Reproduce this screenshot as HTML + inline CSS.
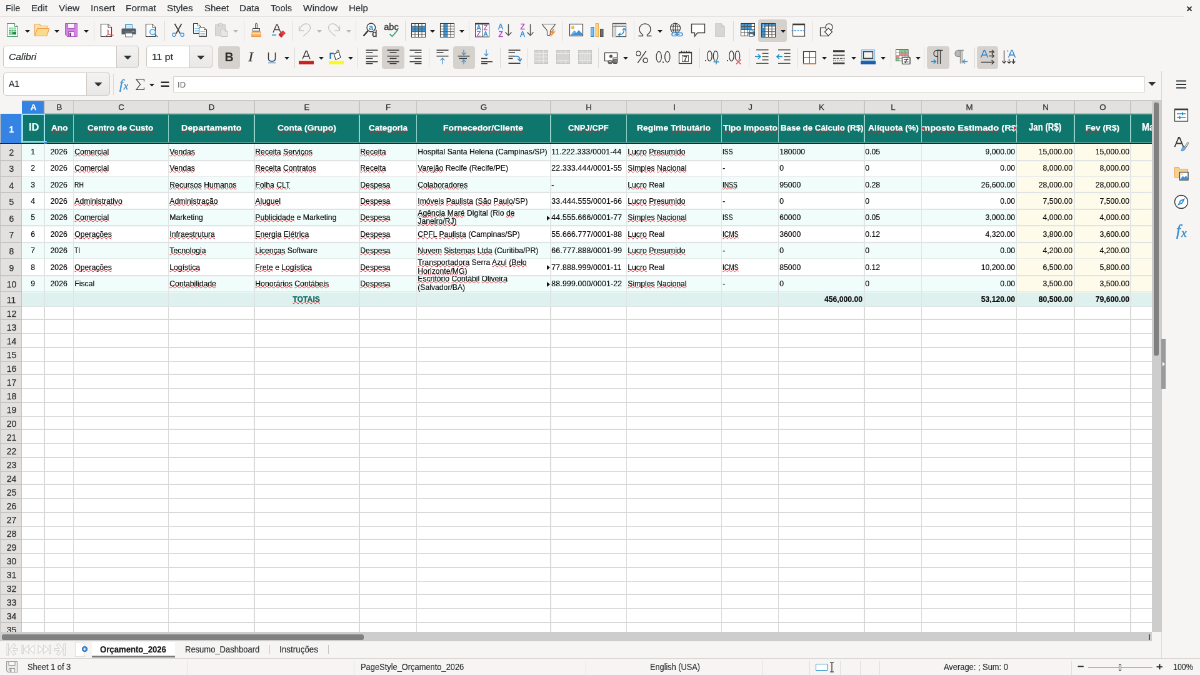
<!DOCTYPE html>
<html lang="en"><head><meta charset="utf-8"><title>Or&ccedil;amento_2026 - LibreOffice Calc</title>
<style>
html,body{margin:0;padding:0;width:1200px;height:675px;overflow:hidden;background:#f6f5f4}
#root{position:absolute;left:0;top:0;width:1920px;height:1080px;transform:scale(.625);transform-origin:0 0;font-family:"Liberation Sans",sans-serif;overflow:hidden;will-change:transform}
#root div,#root span.t,#root svg.i{position:absolute;box-sizing:border-box}
span.t{white-space:pre;transform-origin:0 50%;display:block;-webkit-text-stroke:.22px currentColor}
u{text-decoration:underline wavy #e01b24;text-decoration-thickness:1.45px;text-underline-offset:-0.5px;text-decoration-skip-ink:none}
.c{display:flex;align-items:center;overflow:hidden;white-space:pre;font-size:12.2px;color:#0c0c0c;padding:0 2px 0 1.3px;-webkit-text-stroke:.2px #0c0c0c}
.c.r{justify-content:flex-end}
.c.m{justify-content:center}
.c.b{font-weight:700}
.c.wr{white-space:normal;line-height:13.6px;align-items:center}
.rh{display:flex;align-items:center;justify-content:center;font-size:15.4px;color:#2e2e2e;-webkit-text-stroke:.25px currentColor}

</style></head>
<body>
<div id="root">
<span class="t" style="left:8.8px;top:5.38px;font-size:14.5px;line-height:17.4px;color:#2e3436;transform:scaleX(0.9925);">File</span>
<span class="t" style="left:50px;top:5.38px;font-size:14.5px;line-height:17.4px;color:#2e3436;transform:scaleX(1.0400);">Edit</span>
<span class="t" style="left:94px;top:5.38px;font-size:14.5px;line-height:17.4px;color:#2e3436;transform:scaleX(1.0651);">View</span>
<span class="t" style="left:144.8px;top:5.38px;font-size:14.5px;line-height:17.4px;color:#2e3436;transform:scaleX(1.0809);">Insert</span>
<span class="t" style="left:201.2px;top:5.38px;font-size:14.5px;line-height:17.4px;color:#2e3436;transform:scaleX(1.0627);">Format</span>
<span class="t" style="left:267.2px;top:5.38px;font-size:14.5px;line-height:17.4px;color:#2e3436;transform:scaleX(1.0532);">Styles</span>
<span class="t" style="left:326.8px;top:5.38px;font-size:14.5px;line-height:17.4px;color:#2e3436;transform:scaleX(1.0341);">Sheet</span>
<span class="t" style="left:383.2px;top:5.38px;font-size:14.5px;line-height:17.4px;color:#2e3436;transform:scaleX(1.0444);">Data</span>
<span class="t" style="left:433.2px;top:5.38px;font-size:14.5px;line-height:17.4px;color:#2e3436;transform:scaleX(1.0042);">Tools</span>
<span class="t" style="left:484.8px;top:5.38px;font-size:14.5px;line-height:17.4px;color:#2e3436;transform:scaleX(1.0702);">Window</span>
<span class="t" style="left:558px;top:5.38px;font-size:14.5px;line-height:17.4px;color:#2e3436;transform:scaleX(1.0326);">Help</span>
<div style="left:0px;top:25.6px;width:1894.4px;height:0px;height:1px;background:#e4e2e0;"></div>
<svg class="i" style="left:1897.6px;top:10.08px" width="10" height="8" viewBox="0 0 10 8"><path d="M1.5 0.5L8.5 7.5M8.5 0.5L1.5 7.5" stroke="#2e3436" stroke-width="1.9" fill="none"/></svg>
<div style="left:1212.8px;top:31.2px;width:46.4px;height:36px;background:#d5d2ce;border-radius:4px;"></div>
<svg class="i" style="left:7.68px;top:36px;" width="24" height="24" viewBox="0 0 24 24"><path d="M3.5 1.5H15.5L20.5 6.5V22.5H3.5Z" stroke="#3f9c63" fill="#fff" stroke-width="1" /><path d="M15.5 1.5V6.5H20.5" stroke="#3f9c63" fill="#fff" stroke-width="1" /><rect x="6" y="8.5" width="12" height="11" stroke="none" fill="#4bb06b" stroke-width="1" /><rect x="6" y="8.5" width="12" height="3" stroke="none" fill="#8fd6a4" stroke-width="1" /><path d="M6 11.5H18M6 14.2H18M6 16.9H18M10 8.5V19.5M14 8.5V19.5" stroke="#e2f6e8" fill="none" stroke-width="0.9" /><rect x="12" y="15.5" width="6" height="3" stroke="none" fill="#1f7f42" stroke-width="1" /></svg>
<svg class="i" style="left:55.2px;top:36px;" width="24" height="24" viewBox="0 0 24 24"><path d="M0.5 21V2.5H8L10.5 5.5H20.5V10" stroke="#ee9f4e" fill="#fbe3a8" stroke-width="1.2" /><path d="M0.5 21.5L4.8 9.5H24L19.8 21.5Z" stroke="#ee9f4e" fill="#fadb8c" stroke-width="1.2" /></svg>
<svg class="i" style="left:101.6px;top:36px;" width="24" height="24" viewBox="0 0 24 24"><path d="M2.5 1.5H21.5V22.5H5.5L2.5 19.5Z" stroke="#b055c2" fill="#d287e0" stroke-width="1" /><rect x="6.5" y="1.5" width="11" height="8" stroke="#b055c2" fill="#fbf3fc" stroke-width="1" /><rect x="7.5" y="14.5" width="9" height="8" stroke="#b055c2" fill="#fbf3fc" stroke-width="1" /><rect x="9.2" y="16.5" width="2.6" height="5.5" stroke="none" fill="#6b3a78" stroke-width="1" /></svg>
<svg class="i" style="left:159.2px;top:36px;" width="24" height="24" viewBox="0 0 24 24"><path d="M2.5 2.5H14L19.5 8V22.5H2.5Z" stroke="#3a3a38" fill="#fff" stroke-width="1.2" /><path d="M14 2.5V8H19.5" stroke="#3a3a38" fill="#fff" stroke-width="1" /><path d="M13.6 11.5C12.6 11.5 12.8 14.8 14.2 17.4C15.7 20 20 21.8 22.2 21C23.8 20.3 20 18.8 16 19.2C12.8 19.5 9.5 21.5 9.2 22.8C9 24 11.8 22 13.5 18C14.8 15 14.6 11.5 13.6 11.5Z" stroke="#e8524e" fill="none" stroke-width="1" /></svg>
<svg class="i" style="left:194.4px;top:36px;" width="24" height="24" viewBox="0 0 24 24"><rect x="6.5" y="3.5" width="11" height="7" stroke="#1e8bcd" fill="#cfe9fa" stroke-width="1" /><path d="M2 9.5H22A1.5 1.5 0 0 1 23.5 11V19H0.5V11A1.5 1.5 0 0 1 2 9.5Z" stroke="none" fill="#535c64" stroke-width="1" /><rect x="6.5" y="17" width="11" height="6" stroke="#6d7479" fill="#fff" stroke-width="1" /><path d="M18 14.2H20.5" stroke="#d8dde0" fill="none" stroke-width="1.4" /><path d="M4 15H20" stroke="#78818a" fill="none" stroke-width="1" /></svg>
<svg class="i" style="left:230.4px;top:36px;" width="24" height="24" viewBox="0 0 24 24"><path d="M3.5 2.5H13.5L18.5 7.5V22.5H3.5Z" stroke="#3a3a38" fill="#fff" stroke-width="1.2" /><path d="M13.5 2.5V7.5H18.5" stroke="#3a3a38" fill="#fff" stroke-width="1" /><circle cx="14.2" cy="15.2" r="4.4" fill="#e9f4fc" stroke="#2a8fd6" stroke-width="1.3"/><path d="M17.3 18.3L22.3 23.3" stroke="#2a8fd6" fill="none" stroke-width="1.6" /></svg>
<svg class="i" style="left:272.8px;top:36px;" width="24" height="24" viewBox="0 0 24 24"><path d="M6.5 2L15.2 17.5M17.5 2L8.8 17.5" stroke="#3a3a38" fill="none" stroke-width="1.7" /><circle cx="5.4" cy="19.6" r="2.7" fill="#f6f5f4" stroke="#3d91d6" stroke-width="1.3"/><circle cx="18.6" cy="19.6" r="2.7" fill="#f6f5f4" stroke="#3d91d6" stroke-width="1.3"/></svg>
<svg class="i" style="left:308px;top:36px;" width="24" height="24" viewBox="0 0 24 24"><path d="M1.5 1.5H8.5L12.5 5.5V17.5H1.5Z" stroke="#3a3a38" fill="#fff" stroke-width="1" /><path d="M8.5 1.5V5.5H12.5" stroke="#3a3a38" fill="#fff" stroke-width="1" /><path d="M3.5 9.5H10.5M3.5 12.5H10.5M3.5 15H10.5" stroke="#86c5ee" fill="none" stroke-width="1.2" /><path d="M10.5 7.5H18.5L22.5 11.5V22.5H10.5Z" stroke="#3a3a38" fill="#fff" stroke-width="1" /><path d="M18.5 7.5V11.5H22.5" stroke="#3a3a38" fill="#fff" stroke-width="1" /><path d="M12.5 14.5H20.5M12.5 17.5H20.5M12.5 20.2H20.5" stroke="#86c5ee" fill="none" stroke-width="1.2" /></svg>
<svg class="i" style="left:342.4px;top:36px;" width="24" height="24" viewBox="0 0 24 24"><path d="M2.5 3.5H18.5V21.5H2.5Z" stroke="#c9c9c7" fill="#d9d9d7" stroke-width="1" /><path d="M7.5 3.5V1.8H9.5A1.2 1.2 0 0 1 11.5 1.8H13.5V5H7.5Z" stroke="#c0c0be" fill="#e4e4e2" stroke-width="1" /><path d="M11.5 10.5H18L21.5 14V22.5H11.5Z" stroke="#c0c0be" fill="#e6e6e4" stroke-width="1" /><path d="M18 10.5V14H21.5" stroke="#c0c0be" fill="none" stroke-width="1" /></svg>
<svg class="i" style="left:398.4px;top:36px;" width="24" height="24" viewBox="0 0 24 24"><path d="M10.7 2A1.4 1.4 0 0 1 13.3 2V9.5H10.7Z" stroke="#3a3a38" fill="#fff" stroke-width="1" /><path d="M6.5 9.5H17.5V13.5H6.5Z" stroke="#3a3a38" fill="#fff" stroke-width="1" /><path d="M5.5 14.5H18.5L19.5 22.5H4.5Z" stroke="#ea9447" fill="#f7b66c" stroke-width="1" /><path d="M5.6 17.5H18.6" stroke="#fbe2c4" fill="none" stroke-width="1.6" /></svg>
<svg class="i" style="left:434.4px;top:36px;" width="24" height="24" viewBox="0 0 24 24"><path d="M3 16L8.4 3.5H9.8L15 16M5.2 11.5H12.8" stroke="#3a3a38" fill="none" stroke-width="1.4" /><path d="M1 20H8" stroke="#1e8bcd" fill="none" stroke-width="1.4" /><path d="M11.5 19.5L18.5 12.5L23 17L16 24Z" stroke="none" fill="#e5383b" stroke-width="1" /><path d="M11.5 19.5L14 17L18.5 21.5L16 24Z" stroke="none" fill="#c1272d" stroke-width="1" /></svg>
<svg class="i" style="left:476.64px;top:36px;" width="24" height="24" viewBox="0 0 24 24"><path d="M8 22C13 17.5 19.5 14 19.5 8.5C19.5 4.5 16.5 2 12.5 2C8 2 3.5 6.5 2 12.5M1.5 5V13H9.5" stroke="#c4c4c2" fill="none" stroke-width="1.3" /></svg>
<svg class="i" style="left:521.12px;top:36px;" width="24" height="24" viewBox="0 0 24 24"><path d="M16 22C11 17.5 4.5 14 4.5 8.5C4.5 4.5 7.5 2 11.5 2C16 2 20.5 6.5 22 12.5M22.5 5V13H14.5" stroke="#c4c4c2" fill="none" stroke-width="1.3" /></svg>
<svg class="i" style="left:580px;top:36px;" width="24" height="24" viewBox="0 0 24 24"><circle cx="13.8" cy="8" r="6.8" fill="#fff" stroke="#3a3a38" stroke-width="1.4"/><path d="M9 13L1.5 21.5" stroke="#2e2e2c" fill="none" stroke-width="2.3" /><text x="10.1" y="12.2" font-size="13" fill="#1e8bcd" font-weight="700" font-family="Liberation Sans" >a</text><text x="15.2" y="22.6" font-size="14.5" fill="#2e2e2c" font-weight="400" font-family="Liberation Sans" stroke="#2e2e2c" stroke-width=".3">d</text></svg>
<svg class="i" style="left:614.4px;top:36px;" width="24" height="24" viewBox="0 0 24 24"><text x="0.3" y="11.6" font-size="14.5" fill="#3a3a38" font-weight="400" font-family="Liberation Sans" textLength="23.4" lengthAdjust="spacingAndGlyphs" stroke="#3a3a38" stroke-width=".45">abc</text><path d="M9.5 18.5L13.5 22.3L22.5 11.8" stroke="#31a566" fill="none" stroke-width="1.8" /></svg>
<svg class="i" style="left:656.8px;top:36px;" width="24" height="24" viewBox="0 0 24 24"><rect x="1.5" y="1.5" width="22" height="22" stroke="#3a3a38" fill="#fff" stroke-width="1" /><rect x="1.5" y="5.9" width="5.5" height="4.4" stroke="none" fill="#3d9be0" stroke-width="1" /><rect x="1.5" y="10.3" width="5.5" height="4.4" stroke="none" fill="#3d9be0" stroke-width="1" /><rect x="7.0" y="5.9" width="5.5" height="4.4" stroke="none" fill="#3d9be0" stroke-width="1" /><rect x="7.0" y="10.3" width="5.5" height="4.4" stroke="none" fill="#3d9be0" stroke-width="1" /><rect x="12.5" y="5.9" width="5.5" height="4.4" stroke="none" fill="#3d9be0" stroke-width="1" /><rect x="12.5" y="10.3" width="5.5" height="4.4" stroke="none" fill="#3d9be0" stroke-width="1" /><rect x="18.0" y="5.9" width="5.5" height="4.4" stroke="none" fill="#3d9be0" stroke-width="1" /><rect x="18.0" y="10.3" width="5.5" height="4.4" stroke="none" fill="#3d9be0" stroke-width="1" /><path d="M7.00 1.5V23.5M12.50 1.5V23.5M18.00 1.5V23.5M1.5 5.90H23.5M1.5 10.30H23.5M1.5 14.70H23.5M1.5 19.10H23.5" stroke="#50504c" fill="none" stroke-width="1" /><rect x="1.5" y="1.5" width="22" height="22" stroke="#3a3a38" fill="none" stroke-width="1.1" /></svg>
<svg class="i" style="left:703.2px;top:36px;" width="24" height="24" viewBox="0 0 24 24"><rect x="1.5" y="1.5" width="22" height="22" stroke="#3a3a38" fill="#fff" stroke-width="1" /><rect x="7.0" y="1.5" width="5.5" height="4.4" stroke="none" fill="#3d9be0" stroke-width="1" /><rect x="7.0" y="5.9" width="5.5" height="4.4" stroke="none" fill="#3d9be0" stroke-width="1" /><rect x="7.0" y="10.3" width="5.5" height="4.4" stroke="none" fill="#3d9be0" stroke-width="1" /><rect x="7.0" y="14.700000000000001" width="5.5" height="4.4" stroke="none" fill="#3d9be0" stroke-width="1" /><rect x="7.0" y="19.1" width="5.5" height="4.4" stroke="none" fill="#3d9be0" stroke-width="1" /><path d="M7.00 1.5V23.5M12.50 1.5V23.5M18.00 1.5V23.5M1.5 5.90H23.5M1.5 10.30H23.5M1.5 14.70H23.5M1.5 19.10H23.5" stroke="#50504c" fill="none" stroke-width="1" /><rect x="1.5" y="1.5" width="22" height="22" stroke="#3a3a38" fill="none" stroke-width="1.1" /></svg>
<svg class="i" style="left:759.2px;top:36px;" width="24" height="24" viewBox="0 0 24 24"><rect x="1.5" y="2.5" width="22" height="20.5" stroke="#3a3a38" fill="#fff" stroke-width="1" /><path d="M1 2H24" stroke="#3a3a38" fill="none" stroke-width="2.4" /><path d="M12.5 3V23" stroke="#3a3a38" fill="none" stroke-width="1" /><text x="3.4" y="12.4" font-size="10.5" fill="#3d91d6" font-weight="400" font-family="Liberation Sans" stroke="#3d91d6" stroke-width=".5">A</text><text x="3.8" y="21.8" font-size="10.5" fill="#b44cc4" font-weight="400" font-family="Liberation Sans" stroke="#b44cc4" stroke-width=".5">Z</text><text x="14.8" y="12.4" font-size="10.5" fill="#b44cc4" font-weight="400" font-family="Liberation Sans" stroke="#b44cc4" stroke-width=".5">Z</text><text x="14.4" y="21.8" font-size="10.5" fill="#3d91d6" font-weight="400" font-family="Liberation Sans" stroke="#3d91d6" stroke-width=".5">A</text></svg>
<svg class="i" style="left:796px;top:36px;" width="24" height="24" viewBox="0 0 24 24"><text x="1" y="10.8" font-size="12" fill="#3d91d6" font-weight="400" font-family="Liberation Sans" stroke="#3d91d6" stroke-width=".5">A</text><text x="1.4" y="22.8" font-size="12" fill="#b44cc4" font-weight="400" font-family="Liberation Sans" stroke="#b44cc4" stroke-width=".5">Z</text><path d="M17.5 2.5V20.5M12.5 15.5L17.5 20.8L22.5 15.5" stroke="#55554f" fill="none" stroke-width="1.4" /></svg>
<svg class="i" style="left:831.2px;top:36px;" width="24" height="24" viewBox="0 0 24 24"><text x="1.4" y="10.8" font-size="12" fill="#b44cc4" font-weight="400" font-family="Liberation Sans" stroke="#b44cc4" stroke-width=".5">Z</text><text x="1" y="22.8" font-size="12" fill="#3d91d6" font-weight="400" font-family="Liberation Sans" stroke="#3d91d6" stroke-width=".5">A</text><path d="M17.5 2.5V20.5M12.5 15.5L17.5 20.8L22.5 15.5" stroke="#55554f" fill="none" stroke-width="1.4" /></svg>
<svg class="i" style="left:866.4px;top:36px;" width="24" height="24" viewBox="0 0 24 24"><path d="M1.5 2.5H22.5C20.5 7.5 15 10.5 14.5 13.5V19.5C13 21 10.5 21 9.5 19.8V13.5C9 10.5 3.5 7.5 1.5 2.5Z" stroke="#55554f" fill="none" stroke-width="1.2" /><path d="M19.5 10L13 17.2H17L14 24L22.8 14.2H18.6L21.8 10Z" stroke="none" fill="#f0913d" stroke-width="1" /></svg>
<svg class="i" style="left:909.6px;top:36px;" width="24" height="24" viewBox="0 0 24 24"><rect x="1.5" y="2.5" width="21" height="19" stroke="#3a3a38" fill="#fff" stroke-width="1.2" /><circle cx="6.5" cy="8" r="2.2" fill="#f5c252" stroke="#e8a838" stroke-width=".8"/><path d="M2.5 20.5L9 12.5L12.5 16.5L16 12L21.5 18V20.5Z" stroke="none" fill="#3d91d6" stroke-width="1" /><path d="M2.5 20.5L9 12.5L12 16" stroke="none" fill="#6fb0e6" stroke-width="1" /></svg>
<svg class="i" style="left:943.2px;top:36px;" width="24" height="24" viewBox="0 0 24 24"><rect x="2.5" y="7.5" width="4.5" height="15" stroke="#1e8bcd" fill="#7ebdf0" stroke-width="1" /><rect x="10" y="1.5" width="4.5" height="21" stroke="#f0b14a" fill="#f9d48b" stroke-width="1" /><rect x="17.5" y="10.5" width="4.5" height="12" stroke="#4d4d4b" fill="#6e6e6c" stroke-width="1" /></svg>
<svg class="i" style="left:979.36px;top:36px;" width="24" height="24" viewBox="0 0 24 24"><rect x="1.5" y="1.5" width="21" height="21" stroke="#55554f" fill="#fff" stroke-width="1.3" /><path d="M2 2H23V6.5H6.5V23H2Z" stroke="none" fill="#d6d6d4" stroke-width="1" /><path d="M6.5 2V23M2 6.5H23" stroke="#8a8a88" fill="none" stroke-width="1" /><path d="M11 19.5C18 19.5 19.5 16 19.5 10" stroke="#1e8bcd" fill="none" stroke-width="1.4" /><path d="M16.8 12.2L19.5 9.2L22.2 12.2M13.6 16.8L10.4 19.5L13.6 22.2" stroke="#1e8bcd" fill="none" stroke-width="1.3" /></svg>
<svg class="i" style="left:1020px;top:36px;" width="24" height="24" viewBox="0 0 24 24"><path d="M1.5 21.5H8.5V19.5C5 17.5 3 14.5 3 10.5C3 5.5 7 2 12 2C17 2 21 5.5 21 10.5C21 14.5 19 17.5 15.5 19.5V21.5H22.5" stroke="#3a3a38" fill="none" stroke-width="1.3" /></svg>
<svg class="i" style="left:1069.6px;top:36px;" width="24" height="24" viewBox="0 0 24 24"><circle cx="10.5" cy="9" r="8" fill="none" stroke="#3a3a38" stroke-width="1.1"/><ellipse cx="10.5" cy="9" rx="3.6" ry="8" fill="none" stroke="#3a3a38" stroke-width="1"/><path d="M2.8 6H18.2M2.8 12H18.2M10.5 1V17" stroke="#3a3a38" fill="none" stroke-width="1" /><rect x="5" y="16.5" width="9" height="5" stroke="#3d91d6" fill="#f6f5f4" stroke-width="1.6" rx="2.5"/><rect x="13" y="16.5" width="9" height="5" stroke="#3d91d6" fill="none" stroke-width="1.6" rx="2.5"/><path d="M9.5 19H17.5" stroke="#3d91d6" fill="none" stroke-width="1.6" /></svg>
<svg class="i" style="left:1104.8px;top:36px;" width="24" height="24" viewBox="0 0 24 24"><path d="M1.5 2.5H22.5V16.5H11L6.5 22V16.5H1.5Z" stroke="#3a3a38" fill="#fff" stroke-width="1.4" /></svg>
<svg class="i" style="left:1140px;top:36px;" width="24" height="24" viewBox="0 0 24 24"><path d="M4.5 1.5H14.5L19.5 6.5V22.5H4.5Z" stroke="#cfcfcd" fill="#d6d6d4" stroke-width="1" /><path d="M14.5 1.5V6.5H19.5" stroke="#c6c6c4" fill="#e2e2e0" stroke-width="1" /></svg>
<svg class="i" style="left:1184px;top:36px;" width="24" height="24" viewBox="0 0 24 24"><rect x="1.5" y="1.5" width="22" height="20" stroke="#3a3a38" fill="#fff" stroke-width="1" /><rect x="1.5" y="1.5" width="5.5" height="5.0" stroke="none" fill="#3d9be0" stroke-width="1" /><rect x="7.0" y="1.5" width="5.5" height="5.0" stroke="none" fill="#3d9be0" stroke-width="1" /><rect x="12.5" y="1.5" width="5.5" height="5.0" stroke="none" fill="#3d9be0" stroke-width="1" /><rect x="1.5" y="6.5" width="5.5" height="5.0" stroke="none" fill="#3d9be0" stroke-width="1" /><rect x="7.0" y="6.5" width="5.5" height="5.0" stroke="none" fill="#3d9be0" stroke-width="1" /><rect x="12.5" y="6.5" width="5.5" height="5.0" stroke="none" fill="#3d9be0" stroke-width="1" /><path d="M7.00 1.5V21.5M12.50 1.5V21.5M18.00 1.5V21.5M1.5 6.50H23.5M1.5 11.50H23.5M1.5 16.50H23.5" stroke="#50504c" fill="none" stroke-width="1" /><rect x="1.5" y="1.5" width="22" height="20" stroke="#3a3a38" fill="none" stroke-width="1.1" /><rect x="13.5" y="14.5" width="9.5" height="5.5" stroke="none" fill="#535c64" stroke-width="1" rx="1"/><rect x="15.5" y="12" width="5.5" height="3.5" stroke="#1e8bcd" fill="#cfe9fa" stroke-width="0.9" /><rect x="15.5" y="18" width="5.5" height="4.5" stroke="#6d7479" fill="#fff" stroke-width="0.9" /></svg>
<svg class="i" style="left:1265.6px;top:36px;" width="24" height="24" viewBox="0 0 24 24"><rect x="2.5" y="2.5" width="19" height="19.5" stroke="#3a3a38" fill="#fff" stroke-width="1.2" /><path d="M2 3H22" stroke="#3a3a38" fill="none" stroke-width="2.6" /><path d="M0.5 13H23.5" stroke="#3d91d6" fill="none" stroke-width="1.4" stroke-dasharray="3 1.6"/></svg>
<svg class="i" style="left:1309.6px;top:36px;" width="24" height="24" viewBox="0 0 24 24"><rect x="2.5" y="8.5" width="13" height="13" stroke="#3a3a38" fill="#f6f5f4" stroke-width="1.2" /><circle cx="16.5" cy="7.5" r="5.6" fill="#f6f5f4" stroke="#3a3a38" stroke-width="1.2"/><path d="M9.5 15L15.5 9L21.5 15L15.5 21Z" stroke="#3a3a38" fill="#fff" stroke-width="1.2" /></svg>
<svg class="i" style="left:1217.12px;top:36px;" width="24" height="24" viewBox="0 0 24 24"><rect x="1.5" y="1.5" width="22" height="22" stroke="#3a3a38" fill="#fff" stroke-width="1" /><rect x="1.5" y="1.5" width="5.5" height="4.4" stroke="none" fill="#3d9be0" stroke-width="1" /><rect x="7.0" y="1.5" width="5.5" height="4.4" stroke="none" fill="#3d9be0" stroke-width="1" /><rect x="12.5" y="1.5" width="5.5" height="4.4" stroke="none" fill="#3d9be0" stroke-width="1" /><rect x="18.0" y="1.5" width="5.5" height="4.4" stroke="none" fill="#3d9be0" stroke-width="1" /><rect x="1.5" y="5.9" width="5.5" height="4.4" stroke="none" fill="#3d9be0" stroke-width="1" /><rect x="1.5" y="10.3" width="5.5" height="4.4" stroke="none" fill="#3d9be0" stroke-width="1" /><rect x="1.5" y="14.700000000000001" width="5.5" height="4.4" stroke="none" fill="#3d9be0" stroke-width="1" /><rect x="1.5" y="19.1" width="5.5" height="4.4" stroke="none" fill="#3d9be0" stroke-width="1" /><path d="M7.00 1.5V23.5M12.50 1.5V23.5M18.00 1.5V23.5M1.5 5.90H23.5M1.5 10.30H23.5M1.5 14.70H23.5M1.5 19.10H23.5" stroke="#50504c" fill="none" stroke-width="1" /><rect x="1.5" y="1.5" width="22" height="22" stroke="#3a3a38" fill="none" stroke-width="1.1" /><path d="M4.2 3.5V9M2.6 7.3L4.2 9L5.8 7.3" stroke="#dff0fb" fill="none" stroke-width="0.9" /></svg>
<svg class="i" style="left:40px;top:47.83px" width="8" height="4.5" viewBox="0 0 8 4.5"><path d="M0 0H8L4.0 4.5Z" fill="#1c1c1c"/></svg>
<svg class="i" style="left:87.2px;top:47.83px" width="8" height="4.5" viewBox="0 0 8 4.5"><path d="M0 0H8L4.0 4.5Z" fill="#1c1c1c"/></svg>
<svg class="i" style="left:134px;top:47.83px" width="8" height="4.5" viewBox="0 0 8 4.5"><path d="M0 0H8L4.0 4.5Z" fill="#1c1c1c"/></svg>
<svg class="i" style="left:372.8px;top:47.83px" width="8" height="4.5" viewBox="0 0 8 4.5"><path d="M0 0H8L4.0 4.5Z" fill="#b8b8b6"/></svg>
<svg class="i" style="left:507.2px;top:47.83px" width="8" height="4.5" viewBox="0 0 8 4.5"><path d="M0 0H8L4.0 4.5Z" fill="#b8b8b6"/></svg>
<svg class="i" style="left:554px;top:47.83px" width="8" height="4.5" viewBox="0 0 8 4.5"><path d="M0 0H8L4.0 4.5Z" fill="#b8b8b6"/></svg>
<svg class="i" style="left:688px;top:47.83px" width="8" height="4.5" viewBox="0 0 8 4.5"><path d="M0 0H8L4.0 4.5Z" fill="#1c1c1c"/></svg>
<svg class="i" style="left:735.2px;top:47.83px" width="8" height="4.5" viewBox="0 0 8 4.5"><path d="M0 0H8L4.0 4.5Z" fill="#1c1c1c"/></svg>
<svg class="i" style="left:1052px;top:47.83px" width="8" height="4.5" viewBox="0 0 8 4.5"><path d="M0 0H8L4.0 4.5Z" fill="#1c1c1c"/></svg>
<svg class="i" style="left:1248.8px;top:47.83px" width="8" height="4.5" viewBox="0 0 8 4.5"><path d="M0 0H8L4.0 4.5Z" fill="#1c1c1c"/></svg>
<div style="left:150px;top:32.8px;width:0px;height:32.8px;width:1px;background:#dcdad7;"></div>
<div style="left:263.2px;top:32.8px;width:0px;height:32.8px;width:1px;background:#dcdad7;"></div>
<div style="left:390px;top:32.8px;width:0px;height:32.8px;width:1px;background:#dcdad7;"></div>
<div style="left:468px;top:32.8px;width:0px;height:32.8px;width:1px;background:#dcdad7;"></div>
<div style="left:568.8px;top:32.8px;width:0px;height:32.8px;width:1px;background:#dcdad7;"></div>
<div style="left:648px;top:32.8px;width:0px;height:32.8px;width:1px;background:#dcdad7;"></div>
<div style="left:750px;top:32.8px;width:0px;height:32.8px;width:1px;background:#dcdad7;"></div>
<div style="left:900px;top:32.8px;width:0px;height:32.8px;width:1px;background:#dcdad7;"></div>
<div style="left:1014px;top:32.8px;width:0px;height:32.8px;width:1px;background:#dcdad7;"></div>
<div style="left:1173.2px;top:32.8px;width:0px;height:32.8px;width:1px;background:#dcdad7;"></div>
<div style="left:1300px;top:32.8px;width:0px;height:32.8px;width:1px;background:#dcdad7;"></div>
<div style="left:5.12px;top:73.28px;width:217.28px;height:36.16px;background:#fff;border:1px solid #cdc7c2;border-radius:5px;"></div>
<div style="left:186.08px;top:73.28px;width:36.32px;height:36.16px;background:linear-gradient(#f4f3f2,#e9e8e6);border:1px solid #cdc7c2;border-radius:0 5px 5px 0;"></div>
<svg class="i" style="left:198.31px;top:88.59px" width="12.5" height="6.5" viewBox="0 0 12.5 6.5"><path d="M0 0H12.5L6.25 6.5Z" fill="#2e3436"/></svg>
<span class="t" style="left:14.4px;top:82.5px;font-size:14.5px;line-height:17.4px;color:#2e3436;font-style:italic;transform:scaleX(1.0785);">Calibri</span>
<div style="left:233.6px;top:73.28px;width:106.4px;height:36.16px;background:#fff;border:1px solid #cdc7c2;border-radius:5px;"></div>
<div style="left:302.8px;top:73.28px;width:37.2px;height:36.16px;background:linear-gradient(#f4f3f2,#e9e8e6);border:1px solid #cdc7c2;border-radius:0 5px 5px 0;"></div>
<svg class="i" style="left:315.47px;top:88.59px" width="12.5" height="6.5" viewBox="0 0 12.5 6.5"><path d="M0 0H12.5L6.25 6.5Z" fill="#2e3436"/></svg>
<span class="t" style="left:242.8px;top:82.82px;font-size:14.5px;line-height:17.4px;color:#2e3436;transform:scaleX(1.0902);">11 pt</span>
<div style="left:348.8px;top:73.6px;width:35.2px;height:36.8px;background:#d5d2ce;border-radius:4px;"></div>
<div style="left:611.2px;top:73.6px;width:35.6px;height:36.8px;background:#d5d2ce;border-radius:4px;"></div>
<div style="left:724.8px;top:73.6px;width:35.2px;height:36.8px;background:#d5d2ce;border-radius:4px;"></div>
<div style="left:1483.2px;top:73.6px;width:35.6px;height:36.8px;background:#d5d2ce;border-radius:4px;"></div>
<div style="left:1562.8px;top:73.6px;width:34.4px;height:36.8px;background:#d5d2ce;border-radius:4px;"></div>
<svg class="i" style="left:353.76px;top:79.04px;" width="24" height="24" viewBox="0 0 24 24"><text x="5.4" y="19" font-size="19.5" fill="#2e2e2c" font-weight="700" font-family="Liberation Sans" >B</text></svg>
<svg class="i" style="left:390.4px;top:79.04px;" width="24" height="24" viewBox="0 0 24 24"><text x="7.4" y="19.4" font-size="22" fill="#3a3a38" stroke="#3a3a38" stroke-width=".5" font-style="italic" font-family="Liberation Serif">I</text></svg>
<svg class="i" style="left:423.2px;top:79.04px;" width="24" height="24" viewBox="0 0 24 24"><path d="M6.5 5V14.5C6.5 17.8 8.8 19 12 19C15.2 19 17.5 17.8 17.5 14.5V5" stroke="#3a3a38" fill="none" stroke-width="1.5" /><path d="M6 21.6H18" stroke="#3d91d6" fill="none" stroke-width="1.3" /></svg>
<svg class="i" style="left:477.6px;top:79.04px;" width="24" height="24" viewBox="0 0 24 24"><path d="M6 15.5L11.4 2.5H12.8L18 15.5M8.2 11H15.8" stroke="#3a3a38" fill="none" stroke-width="1.5" /><rect x="-0.5" y="18.5" width="25.5" height="5.5" stroke="none" fill="#c9211e" stroke-width="1" /></svg>
<svg class="i" style="left:526.08px;top:79.04px;" width="24" height="24" viewBox="0 0 24 24"><rect x="-1" y="18.5" width="26" height="5.6" stroke="none" fill="#fafa1e" stroke-width="1" /><path d="M8.5 7.5L16 4L19 13L11 16.5Z" stroke="#3a3a38" fill="#fff" stroke-width="1.1" /><path d="M13 6V2.8A1.6 1.6 0 0 1 16.2 2.8V4.5" stroke="#3a3a38" fill="none" stroke-width="1" /><path d="M2.5 15V6.5H8" stroke="#1e6fb8" fill="none" stroke-width="2" /></svg>
<svg class="i" style="left:582.72px;top:79.04px;" width="24" height="24" viewBox="0 0 24 24"><path d="M2.5 1.3H21.5M2.5 5.2H13.5M2.5 10.7H21.5M2.5 14.6H13.5M2.5 19.8H21.5M2.5 22.8H13.5" stroke="#3a3a38" fill="none" stroke-width="1.5" /></svg>
<svg class="i" style="left:616.96px;top:79.04px;" width="24" height="24" viewBox="0 0 24 24"><path d="M2.5 1.3H21.5M6.5 5.2H17.5M2.5 10.7H21.5M6.5 14.6H17.5M2.5 19.8H21.5M6.5 22.8H17.5" stroke="#3a3a38" fill="none" stroke-width="1.5" /></svg>
<svg class="i" style="left:652.8px;top:79.04px;" width="24" height="24" viewBox="0 0 24 24"><path d="M2.5 1.3H21.5M10.5 5.2H21.5M2.5 10.7H21.5M10.5 14.6H21.5M2.5 19.8H21.5M10.5 22.8H21.5" stroke="#3a3a38" fill="none" stroke-width="1.5" /></svg>
<svg class="i" style="left:696px;top:79.04px;" width="24" height="24" viewBox="0 0 24 24"><path d="M2.5 1.3H21.5M2.5 5.2H13.5M2.5 10.7H21.5" stroke="#3a3a38" fill="none" stroke-width="1.5" /><path d="M12 23.8V14M8.7 17.5L12 14L15.3 17.5" stroke="#3d91d6" fill="none" stroke-width="1.3" /></svg>
<svg class="i" style="left:730.4px;top:79.04px;" width="24" height="24" viewBox="0 0 24 24"><path d="M12 0.5V8.8M8.7 5.300000000000001L12 8.8L15.3 5.300000000000001" stroke="#3d91d6" fill="none" stroke-width="1.3" /><path d="M2.5 10.7H21.5M4.5 14.6H17" stroke="#3a3a38" fill="none" stroke-width="1.5" /><path d="M12 24V16.8M8.7 20.3L12 16.8L15.3 20.3" stroke="#3d91d6" fill="none" stroke-width="1.3" /></svg>
<svg class="i" style="left:766.4px;top:79.04px;" width="24" height="24" viewBox="0 0 24 24"><path d="M12 0.3V10.3M8.7 6.800000000000001L12 10.3L15.3 6.800000000000001" stroke="#3d91d6" fill="none" stroke-width="1.3" /><path d="M4 14.6H14M4 19.8H22M4 22.8H14" stroke="#3a3a38" fill="none" stroke-width="1.5" /></svg>
<svg class="i" style="left:810.88px;top:79.04px;" width="24" height="24" viewBox="0 0 24 24"><path d="M2.5 1.3H21.5M2.5 5.2H13M2.5 10.7H13M2.5 14.6H9.5M2.5 22.3H21.5" stroke="#3a3a38" fill="none" stroke-width="1.5" /><path d="M11 11H15.5C19.5 11 21 13.5 21 17.5M17.2 14.8L21 18.8L23.8 14.6" stroke="#2a84cf" fill="none" stroke-width="1.5" /></svg>
<svg class="i" style="left:853.6px;top:79.04px;" width="24" height="24" viewBox="0 0 24 24"><rect x="1.5" y="1.5" width="21" height="21" stroke="#c4c4c2" fill="#d4d4d2" stroke-width="1" /><path d="M1.5 6.5H22.5M1.5 17.5H22.5M8.5 1.5V6.5M15.5 1.5V6.5M8.5 17.5V22.5M15.5 17.5V22.5M1.5 12H22.5M8.5 6.5V17.5M15.5 6.5V17.5" stroke="#e9e9e7" fill="none" stroke-width="1.1" /></svg>
<svg class="i" style="left:888.8px;top:79.04px;" width="24" height="24" viewBox="0 0 24 24"><rect x="1.5" y="1.5" width="21" height="21" stroke="#c4c4c2" fill="#d4d4d2" stroke-width="1" /><path d="M1.5 6.5H22.5M1.5 17.5H22.5M8.5 1.5V6.5M15.5 1.5V6.5M8.5 17.5V22.5M15.5 17.5V22.5" stroke="#e9e9e7" fill="none" stroke-width="1.1" /></svg>
<svg class="i" style="left:924px;top:79.04px;" width="24" height="24" viewBox="0 0 24 24"><rect x="1.5" y="1.5" width="21" height="21" stroke="#c4c4c2" fill="#d4d4d2" stroke-width="1" /><path d="M1.5 6.5H22.5M1.5 17.5H22.5M8.5 1.5V22.5M15.5 1.5V22.5M5 6.5V17.5M12 6.5V17.5M19 6.5V17.5" stroke="#e9e9e7" fill="none" stroke-width="1.1" /></svg>
<svg class="i" style="left:965.6px;top:79.04px;" width="24" height="24" viewBox="0 0 24 24"><rect x="1.5" y="5.5" width="20" height="13" stroke="#3a3a38" fill="#fff" stroke-width="1.3" /><circle cx="11.5" cy="11" r="2.6" fill="#55554f"/><path d="M7 19.2A3.2 1.5 0 0 0 13.4 19.2V21.4A3.2 1.5 0 0 1 7 21.4Z" stroke="#3a3a38" fill="#8a8a88" stroke-width="0.9" /><ellipse cx="10.2" cy="19" rx="3.2" ry="1.5" fill="#c9c9c7" stroke="#3a3a38" stroke-width=".9"/><rect x="14.7" y="14.5" width="7" height="8" stroke="#3a3a38" fill="#8a8a88" stroke-width="0.9" rx="1.5"/><ellipse cx="18.2" cy="14.6" rx="3.5" ry="1.6" fill="#c9c9c7" stroke="#3a3a38" stroke-width=".9"/><path d="M14.7 17.3A3.5 1.5 0 0 0 21.7 17.3M14.7 19.8A3.5 1.5 0 0 0 21.7 19.8" stroke="#3a3a38" fill="none" stroke-width="0.8" /></svg>
<svg class="i" style="left:1015.2px;top:79.04px;" width="24" height="24" viewBox="0 0 24 24"><circle cx="6.3" cy="6.6" r="3.7" fill="none" stroke="#3a3a38" stroke-width="1.4"/><circle cx="17.7" cy="17.6" r="3.7" fill="none" stroke="#3a3a38" stroke-width="1.4"/><path d="M18.8 2.5L5.2 21.8" stroke="#3a3a38" fill="none" stroke-width="1.4" /></svg>
<svg class="i" style="left:1049.28px;top:79.04px;" width="24" height="24" viewBox="0 0 24 24"><ellipse cx="5.2" cy="12" rx="4.1" ry="8.6" fill="none" stroke="#3a3a38" stroke-width="1.3"/><ellipse cx="18.8" cy="12" rx="4.1" ry="8.6" fill="none" stroke="#3a3a38" stroke-width="1.3"/><rect x="11" y="19.6" width="1.9" height="1.9" stroke="none" fill="#2e2e2c" stroke-width="1" /></svg>
<svg class="i" style="left:1084.96px;top:79.04px;" width="24" height="24" viewBox="0 0 24 24"><rect x="1.5" y="4.5" width="20" height="18" stroke="#3a3a38" fill="#fff" stroke-width="1.3" /><path d="M1.5 5.2H21.5" stroke="#3a3a38" fill="none" stroke-width="2.2" /><path d="M5.5 2V6M17.5 2V6M9.5 2.5V5M13.5 2.5V5" stroke="#3a3a38" fill="none" stroke-width="1.4" /><rect x="6.5" y="9.5" width="10" height="10" stroke="#55554f" fill="none" stroke-width="0.9" /><text x="8.2" y="18.6" font-size="11.5" fill="#2e2e2c" font-weight="400" font-family="Liberation Sans" stroke="#2e2e2c" stroke-width=".4">7</text></svg>
<svg class="i" style="left:1128.16px;top:79.04px;" width="24" height="24" viewBox="0 0 24 24"><rect x="0.2" y="17" width="1.8" height="1.8" stroke="none" fill="#2e2e2c" stroke-width="1" /><ellipse cx="7.4" cy="10.5" rx="3.7" ry="8" fill="none" stroke="#3a3a38" stroke-width="1.3"/><ellipse cx="17" cy="10.5" rx="3.7" ry="8" fill="none" stroke="#3a3a38" stroke-width="1.3"/><path d="M12.5 20H23M17.8 15V25" stroke="#f6f5f4" fill="none" stroke-width="3.4" /><path d="M13.5 20H22.5M18 15.5V24.5" stroke="#1e8bcd" fill="none" stroke-width="1.5" /></svg>
<svg class="i" style="left:1163.04px;top:79.04px;" width="24" height="24" viewBox="0 0 24 24"><rect x="0.2" y="17" width="1.8" height="1.8" stroke="none" fill="#2e2e2c" stroke-width="1" /><ellipse cx="7.4" cy="10.5" rx="3.7" ry="8" fill="none" stroke="#3a3a38" stroke-width="1.3"/><ellipse cx="17" cy="10.5" rx="3.7" ry="8" fill="none" stroke="#3a3a38" stroke-width="1.3"/><path d="M14.5 16L22.5 24M22.5 16L14.5 24" stroke="#f6f5f4" fill="none" stroke-width="3.2" /><path d="M14.5 16L22.5 24M22.5 16L14.5 24" stroke="#e5383b" fill="none" stroke-width="1.4" /></svg>
<svg class="i" style="left:1207.2px;top:79.04px;" width="24" height="24" viewBox="0 0 24 24"><path d="M3 0.8H22.5M12.5 6.4H22.5M12.5 11.6H22.5M12.5 16.8H22.5M3 22.4H22.5" stroke="#55554f" fill="none" stroke-width="1.4" /><path d="M1 11.6H9.5M6 8L9.8 11.6L6 15.2" stroke="#1e8bcd" fill="none" stroke-width="1.5" /></svg>
<svg class="i" style="left:1242.08px;top:79.04px;" width="24" height="24" viewBox="0 0 24 24"><path d="M3 0.8H22.5M12.5 6.4H22.5M12.5 11.6H22.5M12.5 16.8H22.5M3 22.4H22.5" stroke="#55554f" fill="none" stroke-width="1.4" /><path d="M1.2 11.6H9.8M4.8 8L1 11.6L4.8 15.2" stroke="#1e8bcd" fill="none" stroke-width="1.5" /></svg>
<svg class="i" style="left:1283.04px;top:79.04px;" width="24" height="24" viewBox="0 0 24 24"><rect x="2.5" y="3.5" width="19.5" height="19.5" stroke="#3a3a38" fill="#fff" stroke-width="1.2" /><path d="M12.2 3.5V23M2.5 13.2H22" stroke="#3a3a38" fill="none" stroke-width="1.1" /><path d="M2 23H22.5" stroke="#ed8733" fill="none" stroke-width="1.3" /></svg>
<svg class="i" style="left:1330.4px;top:79.04px;" width="24" height="24" viewBox="0 0 24 24"><path d="M3 2.8H21.5" stroke="#3a3a38" fill="none" stroke-width="3.2" /><path d="M3 9.5H21.5" stroke="#55554f" fill="none" stroke-width="2" /><path d="M3 14.6H21.5" stroke="#55554f" fill="none" stroke-width="1.5" stroke-dasharray="4 1.5"/><path d="M3 18.2H21.5" stroke="#55554f" fill="none" stroke-width="1.4" stroke-dasharray="1.5 1.5"/><path d="M3 22.3H21.5" stroke="#3a3a38" fill="none" stroke-width="2.6" /></svg>
<svg class="i" style="left:1376.8px;top:79.04px;" width="24" height="24" viewBox="0 0 24 24"><rect x="1.5" y="0.8" width="21" height="16.2" stroke="#7ab6ea" fill="#e3f0fb" stroke-width="1.2" /><rect x="4.5" y="3.7" width="15" height="10.6" stroke="#3a3a38" fill="#f3f3f1" stroke-width="1.4" /><rect x="-0.5" y="18.4" width="25.5" height="6" stroke="none" fill="#1c5fa8" stroke-width="1" /></svg>
<svg class="i" style="left:1432.8px;top:79.04px;" width="24" height="24" viewBox="0 0 24 24"><rect x="0.5" y="0.5" width="19.5" height="18" stroke="#3a3a38" fill="#fff" stroke-width="1" /><rect x="5.5" y="1" width="14" height="4.4" stroke="none" fill="#8ad18f" stroke-width="1" /><rect x="5.5" y="5.6" width="14" height="4.4" stroke="none" fill="#ee8d8d" stroke-width="1" /><rect x="1" y="10" width="4.4" height="4" stroke="none" fill="#ee8d8d" stroke-width="1" /><rect x="1" y="14.2" width="4.4" height="4" stroke="none" fill="#8ad18f" stroke-width="1" /><path d="M5.5 0.5V18.5M10.2 0.5V18.5M15 0.5V18.5M0.5 5.2H20M0.5 9.8H20M0.5 14.2H20" stroke="#7c7c7a" fill="none" stroke-width="0.8" /><rect x="10.5" y="12.5" width="12.5" height="11" stroke="#3a3a38" fill="#fff" stroke-width="1.3" rx="1"/><path d="M13 16.5H20.5M13 20H20.5M18.6 14.5L15 22" stroke="#3a3a38" fill="none" stroke-width="1.2" /></svg>
<svg class="i" style="left:1488.8px;top:79.04px;" width="24" height="24" viewBox="0 0 24 24"><path d="M14.5 1.5H10.5C7 1.5 5 3.8 5 6.6C5 9.4 7 11.5 10.5 11.5H11.5" stroke="#3a3a38" fill="none" stroke-width="1.3" /><path d="M11.5 1.5V23M15.5 1.5V23M10 1.5H19.5" stroke="#3a3a38" fill="none" stroke-width="1.3" /><path d="M1 19.5H8M5 16.3L8.4 19.5L5 22.7" stroke="#1e8bcd" fill="none" stroke-width="1.4" /></svg>
<svg class="i" style="left:1524.96px;top:79.04px;" width="24" height="24" viewBox="0 0 24 24"><path d="M11.5 1.5H8.5C5 1.5 3 3.8 3 6.6C3 9.4 5 11.5 8.5 11.5H11.5Z" stroke="#8a8a88" fill="#b9b9b7" stroke-width="1.2" /><path d="M11.5 1.5V22.5M14.2 1.5V22.5M8 1.5H17" stroke="#8a8a88" fill="none" stroke-width="1.3" /><path d="M15.5 19.5H23M19 16.3L15.4 19.5L19 22.7" stroke="#3d91d6" fill="none" stroke-width="1.4" /></svg>
<svg class="i" style="left:1568px;top:79.04px;" width="24" height="24" viewBox="0 0 24 24"><path d="M1.5 13L6.4 1.5H7.6L12.5 13M3.3 9H10.7" stroke="#2a84cf" fill="none" stroke-width="1.5" /><path d="M14.5 4H22M19 1L22.3 4L19 7M14.5 10.5H22M19 7.5L22.3 10.5L19 13.5M1.5 20.5H22M18.5 17L22.3 20.5L18.5 24" stroke="#3a3a38" fill="none" stroke-width="1.3" /></svg>
<svg class="i" style="left:1603.36px;top:79.04px;" width="24" height="24" viewBox="0 0 24 24"><path d="M3.5 1.5V22M0.5 18.5L3.5 22.3L6.5 18.5M9.5 1.5V3.5" stroke="#3a3a38" fill="none" stroke-width="1.3" /><path d="M10.5 13L15.4 1.5H16.6L21.5 13M12.3 9H19.7" stroke="#2a84cf" fill="none" stroke-width="1.5" /><path d="M11.5 15V22M8.8 19.2L11.5 22.3L14.2 19.2M18.5 15V22M15.8 19.2L18.5 22.3L21.2 19.2" stroke="#3a3a38" fill="none" stroke-width="1.3" /></svg>
<svg class="i" style="left:454.8px;top:91.03px" width="8" height="4.5" viewBox="0 0 8 4.5"><path d="M0 0H8L4.0 4.5Z" fill="#1c1c1c"/></svg>
<svg class="i" style="left:510px;top:91.03px" width="8" height="4.5" viewBox="0 0 8 4.5"><path d="M0 0H8L4.0 4.5Z" fill="#1c1c1c"/></svg>
<svg class="i" style="left:557.2px;top:91.03px" width="8" height="4.5" viewBox="0 0 8 4.5"><path d="M0 0H8L4.0 4.5Z" fill="#1c1c1c"/></svg>
<svg class="i" style="left:997.2px;top:91.03px" width="8" height="4.5" viewBox="0 0 8 4.5"><path d="M0 0H8L4.0 4.5Z" fill="#1c1c1c"/></svg>
<svg class="i" style="left:1315.2px;top:91.03px" width="8" height="4.5" viewBox="0 0 8 4.5"><path d="M0 0H8L4.0 4.5Z" fill="#1c1c1c"/></svg>
<svg class="i" style="left:1362px;top:91.03px" width="8" height="4.5" viewBox="0 0 8 4.5"><path d="M0 0H8L4.0 4.5Z" fill="#1c1c1c"/></svg>
<svg class="i" style="left:1409.2px;top:91.03px" width="8" height="4.5" viewBox="0 0 8 4.5"><path d="M0 0H8L4.0 4.5Z" fill="#1c1c1c"/></svg>
<svg class="i" style="left:1464.8px;top:91.03px" width="8" height="4.5" viewBox="0 0 8 4.5"><path d="M0 0H8L4.0 4.5Z" fill="#1c1c1c"/></svg>
<div style="left:470.88px;top:76px;width:0px;height:32.8px;width:1px;background:#dcdad7;"></div>
<div style="left:572px;top:76px;width:0px;height:32.8px;width:1px;background:#dcdad7;"></div>
<div style="left:686px;top:76px;width:0px;height:32.8px;width:1px;background:#dcdad7;"></div>
<div style="left:800px;top:76px;width:0px;height:32.8px;width:1px;background:#dcdad7;"></div>
<div style="left:844px;top:76px;width:0px;height:32.8px;width:1px;background:#dcdad7;"></div>
<div style="left:956.8px;top:76px;width:0px;height:32.8px;width:1px;background:#dcdad7;"></div>
<div style="left:1118.8px;top:76px;width:0px;height:32.8px;width:1px;background:#dcdad7;"></div>
<div style="left:1198px;top:76px;width:0px;height:32.8px;width:1px;background:#dcdad7;"></div>
<div style="left:1276px;top:76px;width:0px;height:32.8px;width:1px;background:#dcdad7;"></div>
<div style="left:1425.2px;top:76px;width:0px;height:32.8px;width:1px;background:#dcdad7;"></div>
<div style="left:1478.4px;top:76px;width:0px;height:32.8px;width:1px;background:#dcdad7;"></div>
<div style="left:1558.8px;top:76px;width:0px;height:32.8px;width:1px;background:#dcdad7;"></div>
<div style="left:5.12px;top:116.16px;width:170.88px;height:36.48px;background:#fff;border:1px solid #cdc7c2;border-radius:5px;"></div>
<div style="left:138.08px;top:116.16px;width:37.92px;height:36.48px;background:linear-gradient(#f4f3f2,#e9e8e6);border:1px solid #cdc7c2;border-radius:0 5px 5px 0;"></div>
<svg class="i" style="left:151.11px;top:131.63px" width="12.5" height="6.5" viewBox="0 0 12.5 6.5"><path d="M0 0H12.5L6.25 6.5Z" fill="#2e3436"/></svg>
<span class="t" style="left:14px;top:126.02px;font-size:14.5px;line-height:17.4px;color:#2e3436;transform:scaleX(0.9690);">A1</span>
<div style="left:180.8px;top:118.4px;width:0px;height:33.6px;width:1px;background:#dcdad7;"></div>
<svg class="i" style="left:187.2px;top:122.88px;" width="24" height="24" viewBox="0 0 24 24"><g stroke="#3d91d0" stroke-width=".45"><text x="4" y="18.5" font-size="21.5" fill="#3d91d0" font-style="italic" font-family="Liberation Serif">f</text><text x="10.8" y="19.5" font-size="16.5" fill="#3d91d0" font-style="italic" font-family="Liberation Serif">x</text></g></svg>
<svg class="i" style="left:211.6px;top:122.88px;" width="24" height="24" viewBox="0 0 24 24"><path d="M18.5 7.5V4H6L12.5 12L6 20.5H18.5V17" stroke="#3a3a38" fill="none" stroke-width="1.2" /></svg>
<svg class="i" style="left:238.8px;top:133.75px" width="8" height="4.5" viewBox="0 0 8 4.5"><path d="M0 0H8L4.0 4.5Z" fill="#1c1c1c"/></svg>
<svg class="i" style="left:251.6px;top:122.88px;" width="24" height="24" viewBox="0 0 24 24"><path d="M5.5 8.8H18.5M5.5 14.8H18.5" stroke="#2e2e2c" fill="none" stroke-width="2.6" /></svg>
<div style="left:277.12px;top:121.92px;width:1554.88px;height:26.56px;background:#fff;border:1px solid #d6d2ce;border-radius:1px;"></div>
<span class="t" style="left:284.16px;top:127.68px;font-size:12.8px;line-height:15.36px;color:#5a5a5a;transform:scaleX(1.0240);-webkit-text-stroke:0;">ID</span>
<svg class="i" style="left:1836.95px;top:131.15px" width="12.5" height="6.5" viewBox="0 0 12.5 6.5"><path d="M0 0H12.5L6.25 6.5Z" fill="#2e3436"/></svg>
<div style="left:1857.6px;top:113.6px;width:0px;height:46.4px;width:1px;background:#d8d5d2;"></div>
<svg class="i" style="left:1881.92px;top:128.48px" width="16" height="14" viewBox="0 0 16 14"><path d="M0 1.5H16M0 7H16M0 12.5H16" stroke="#2e3436" stroke-width="2" fill="none"/></svg>
<div style="left:0px;top:160px;width:1843.2px;height:851.2px;background:#fff;overflow:hidden;"></div>
<div style="left:0;top:0;width:1843.2px;height:1011.2px;overflow:hidden;"><div style="left:0px;top:160px;width:35px;height:22.2px;background:#f6f5f4;"></div>
<div class="rh" style="left:35px;top:160px;width:37px;height:22.2px;background:#3584e4;color:#fff;font-weight:700;font-size:13.4px;padding-top:1px;">A</div>
<div class="rh" style="left:72px;top:160px;width:46px;height:22.2px;background:#e2e1df;color:#2e2e2e;font-size:13.4px;padding-top:1px;">B</div>
<div class="rh" style="left:118px;top:160px;width:152px;height:22.2px;background:#e2e1df;color:#2e2e2e;font-size:13.4px;padding-top:1px;">C</div>
<div class="rh" style="left:270px;top:160px;width:137px;height:22.2px;background:#e2e1df;color:#2e2e2e;font-size:13.4px;padding-top:1px;">D</div>
<div class="rh" style="left:407px;top:160px;width:168px;height:22.2px;background:#e2e1df;color:#2e2e2e;font-size:13.4px;padding-top:1px;">E</div>
<div class="rh" style="left:575px;top:160px;width:92px;height:22.2px;background:#e2e1df;color:#2e2e2e;font-size:13.4px;padding-top:1px;">F</div>
<div class="rh" style="left:667px;top:160px;width:214px;height:22.2px;background:#e2e1df;color:#2e2e2e;font-size:13.4px;padding-top:1px;">G</div>
<div class="rh" style="left:881px;top:160px;width:122px;height:22.2px;background:#e2e1df;color:#2e2e2e;font-size:13.4px;padding-top:1px;">H</div>
<div class="rh" style="left:1003px;top:160px;width:152px;height:22.2px;background:#e2e1df;color:#2e2e2e;font-size:13.4px;padding-top:1px;">I</div>
<div class="rh" style="left:1155px;top:160px;width:91px;height:22.2px;background:#e2e1df;color:#2e2e2e;font-size:13.4px;padding-top:1px;">J</div>
<div class="rh" style="left:1246px;top:160px;width:137px;height:22.2px;background:#e2e1df;color:#2e2e2e;font-size:13.4px;padding-top:1px;">K</div>
<div class="rh" style="left:1383px;top:160px;width:92px;height:22.2px;background:#e2e1df;color:#2e2e2e;font-size:13.4px;padding-top:1px;">L</div>
<div class="rh" style="left:1475px;top:160px;width:152px;height:22.2px;background:#e2e1df;color:#2e2e2e;font-size:13.4px;padding-top:1px;">M</div>
<div class="rh" style="left:1627px;top:160px;width:92px;height:22.2px;background:#e2e1df;color:#2e2e2e;font-size:13.4px;padding-top:1px;">N</div>
<div class="rh" style="left:1719px;top:160px;width:91px;height:22.2px;background:#e2e1df;color:#2e2e2e;font-size:13.4px;padding-top:1px;">O</div>
<div class="rh" style="left:1810px;top:160px;width:33.2px;height:22.2px;background:#e2e1df;color:#2e2e2e;font-size:13.4px;padding-top:1px;"></div>
<div style="left:35px;top:160px;width:1808.2px;height:1.6px;background:#cbcac8;"></div>
<div class="rh" style="left:1.2px;top:182.2px;width:33.8px;height:47.9px;background:#3584e4;color:#fff;font-weight:700;overflow:hidden;"><span style="transform:scaleX(.9);display:block;padding-top:1.5px">1</span></div>
<div class="rh" style="left:1.2px;top:230.1px;width:33.8px;height:26.4px;background:#e2e1df;color:#2e2e2e;overflow:hidden;"><span style="transform:scaleX(.9);display:block;padding-top:1.5px">2</span></div>
<div class="rh" style="left:1.2px;top:256.5px;width:33.8px;height:26.4px;background:#e2e1df;color:#2e2e2e;overflow:hidden;"><span style="transform:scaleX(.9);display:block;padding-top:1.5px">3</span></div>
<div class="rh" style="left:1.2px;top:282.9px;width:33.8px;height:26.4px;background:#e2e1df;color:#2e2e2e;overflow:hidden;"><span style="transform:scaleX(.9);display:block;padding-top:1.5px">4</span></div>
<div class="rh" style="left:1.2px;top:309.3px;width:33.8px;height:26.4px;background:#e2e1df;color:#2e2e2e;overflow:hidden;"><span style="transform:scaleX(.9);display:block;padding-top:1.5px">5</span></div>
<div class="rh" style="left:1.2px;top:335.7px;width:33.8px;height:26.4px;background:#e2e1df;color:#2e2e2e;overflow:hidden;"><span style="transform:scaleX(.9);display:block;padding-top:1.5px">6</span></div>
<div class="rh" style="left:1.2px;top:362.1px;width:33.8px;height:26.4px;background:#e2e1df;color:#2e2e2e;overflow:hidden;"><span style="transform:scaleX(.9);display:block;padding-top:1.5px">7</span></div>
<div class="rh" style="left:1.2px;top:388.5px;width:33.8px;height:26.4px;background:#e2e1df;color:#2e2e2e;overflow:hidden;"><span style="transform:scaleX(.9);display:block;padding-top:1.5px">8</span></div>
<div class="rh" style="left:1.2px;top:414.9px;width:33.8px;height:26.4px;background:#e2e1df;color:#2e2e2e;overflow:hidden;"><span style="transform:scaleX(.9);display:block;padding-top:1.5px">9</span></div>
<div class="rh" style="left:1.2px;top:441.3px;width:33.8px;height:26.4px;background:#e2e1df;color:#2e2e2e;overflow:hidden;"><span style="transform:scaleX(.9);display:block;padding-top:1.5px">10</span></div>
<div class="rh" style="left:1.2px;top:467.7px;width:33.8px;height:22.8px;background:#e2e1df;color:#2e2e2e;overflow:hidden;"><span style="transform:scaleX(.9);display:block;padding-top:1.5px">11</span></div>
<div class="rh" style="left:1.2px;top:490.5px;width:33.8px;height:22px;background:#e2e1df;color:#2e2e2e;overflow:hidden;"><span style="transform:scaleX(.9);display:block;padding-top:1.5px">12</span></div>
<div class="rh" style="left:1.2px;top:512.5px;width:33.8px;height:22px;background:#e2e1df;color:#2e2e2e;overflow:hidden;"><span style="transform:scaleX(.9);display:block;padding-top:1.5px">13</span></div>
<div class="rh" style="left:1.2px;top:534.5px;width:33.8px;height:22px;background:#e2e1df;color:#2e2e2e;overflow:hidden;"><span style="transform:scaleX(.9);display:block;padding-top:1.5px">14</span></div>
<div class="rh" style="left:1.2px;top:556.5px;width:33.8px;height:22px;background:#e2e1df;color:#2e2e2e;overflow:hidden;"><span style="transform:scaleX(.9);display:block;padding-top:1.5px">15</span></div>
<div class="rh" style="left:1.2px;top:578.5px;width:33.8px;height:22px;background:#e2e1df;color:#2e2e2e;overflow:hidden;"><span style="transform:scaleX(.9);display:block;padding-top:1.5px">16</span></div>
<div class="rh" style="left:1.2px;top:600.5px;width:33.8px;height:22px;background:#e2e1df;color:#2e2e2e;overflow:hidden;"><span style="transform:scaleX(.9);display:block;padding-top:1.5px">17</span></div>
<div class="rh" style="left:1.2px;top:622.5px;width:33.8px;height:22px;background:#e2e1df;color:#2e2e2e;overflow:hidden;"><span style="transform:scaleX(.9);display:block;padding-top:1.5px">18</span></div>
<div class="rh" style="left:1.2px;top:644.5px;width:33.8px;height:22px;background:#e2e1df;color:#2e2e2e;overflow:hidden;"><span style="transform:scaleX(.9);display:block;padding-top:1.5px">19</span></div>
<div class="rh" style="left:1.2px;top:666.5px;width:33.8px;height:22px;background:#e2e1df;color:#2e2e2e;overflow:hidden;"><span style="transform:scaleX(.9);display:block;padding-top:1.5px">20</span></div>
<div class="rh" style="left:1.2px;top:688.5px;width:33.8px;height:22px;background:#e2e1df;color:#2e2e2e;overflow:hidden;"><span style="transform:scaleX(.9);display:block;padding-top:1.5px">21</span></div>
<div class="rh" style="left:1.2px;top:710.5px;width:33.8px;height:22px;background:#e2e1df;color:#2e2e2e;overflow:hidden;"><span style="transform:scaleX(.9);display:block;padding-top:1.5px">22</span></div>
<div class="rh" style="left:1.2px;top:732.5px;width:33.8px;height:22px;background:#e2e1df;color:#2e2e2e;overflow:hidden;"><span style="transform:scaleX(.9);display:block;padding-top:1.5px">23</span></div>
<div class="rh" style="left:1.2px;top:754.5px;width:33.8px;height:22px;background:#e2e1df;color:#2e2e2e;overflow:hidden;"><span style="transform:scaleX(.9);display:block;padding-top:1.5px">24</span></div>
<div class="rh" style="left:1.2px;top:776.5px;width:33.8px;height:22px;background:#e2e1df;color:#2e2e2e;overflow:hidden;"><span style="transform:scaleX(.9);display:block;padding-top:1.5px">25</span></div>
<div class="rh" style="left:1.2px;top:798.5px;width:33.8px;height:22px;background:#e2e1df;color:#2e2e2e;overflow:hidden;"><span style="transform:scaleX(.9);display:block;padding-top:1.5px">26</span></div>
<div class="rh" style="left:1.2px;top:820.5px;width:33.8px;height:22px;background:#e2e1df;color:#2e2e2e;overflow:hidden;"><span style="transform:scaleX(.9);display:block;padding-top:1.5px">27</span></div>
<div class="rh" style="left:1.2px;top:842.5px;width:33.8px;height:22px;background:#e2e1df;color:#2e2e2e;overflow:hidden;"><span style="transform:scaleX(.9);display:block;padding-top:1.5px">28</span></div>
<div class="rh" style="left:1.2px;top:864.5px;width:33.8px;height:22px;background:#e2e1df;color:#2e2e2e;overflow:hidden;"><span style="transform:scaleX(.9);display:block;padding-top:1.5px">29</span></div>
<div class="rh" style="left:1.2px;top:886.5px;width:33.8px;height:22px;background:#e2e1df;color:#2e2e2e;overflow:hidden;"><span style="transform:scaleX(.9);display:block;padding-top:1.5px">30</span></div>
<div class="rh" style="left:1.2px;top:908.5px;width:33.8px;height:22px;background:#e2e1df;color:#2e2e2e;overflow:hidden;"><span style="transform:scaleX(.9);display:block;padding-top:1.5px">31</span></div>
<div class="rh" style="left:1.2px;top:930.5px;width:33.8px;height:22px;background:#e2e1df;color:#2e2e2e;overflow:hidden;"><span style="transform:scaleX(.9);display:block;padding-top:1.5px">32</span></div>
<div class="rh" style="left:1.2px;top:952.5px;width:33.8px;height:22px;background:#e2e1df;color:#2e2e2e;overflow:hidden;"><span style="transform:scaleX(.9);display:block;padding-top:1.5px">33</span></div>
<div class="rh" style="left:1.2px;top:974.5px;width:33.8px;height:22px;background:#e2e1df;color:#2e2e2e;overflow:hidden;"><span style="transform:scaleX(.9);display:block;padding-top:1.5px">34</span></div>
<div class="rh" style="left:1.2px;top:996.5px;width:33.8px;height:22px;background:#e2e1df;color:#2e2e2e;overflow:hidden;"><span style="transform:scaleX(.9);display:block;padding-top:1.5px">35</span></div>
<div style="left:70.4px;top:160px;width:1.6px;height:22.2px;background:#c6c5c3;"></div>
<div style="left:116.8px;top:160px;width:1.6px;height:22.2px;background:#c6c5c3;"></div>
<div style="left:268.8px;top:160px;width:1.6px;height:22.2px;background:#c6c5c3;"></div>
<div style="left:406.4px;top:160px;width:1.6px;height:22.2px;background:#c6c5c3;"></div>
<div style="left:574.4px;top:160px;width:1.6px;height:22.2px;background:#c6c5c3;"></div>
<div style="left:665.6px;top:160px;width:1.6px;height:22.2px;background:#c6c5c3;"></div>
<div style="left:880px;top:160px;width:1.6px;height:22.2px;background:#c6c5c3;"></div>
<div style="left:1001.6px;top:160px;width:1.6px;height:22.2px;background:#c6c5c3;"></div>
<div style="left:1153.6px;top:160px;width:1.6px;height:22.2px;background:#c6c5c3;"></div>
<div style="left:1244.8px;top:160px;width:1.6px;height:22.2px;background:#c6c5c3;"></div>
<div style="left:1382.4px;top:160px;width:1.6px;height:22.2px;background:#c6c5c3;"></div>
<div style="left:1473.6px;top:160px;width:1.6px;height:22.2px;background:#c6c5c3;"></div>
<div style="left:1625.6px;top:160px;width:1.6px;height:22.2px;background:#c6c5c3;"></div>
<div style="left:1718.4px;top:160px;width:1.6px;height:22.2px;background:#c6c5c3;"></div>
<div style="left:1808px;top:160px;width:1.6px;height:22.2px;background:#c6c5c3;"></div>
<div style="left:1.2px;top:228.8px;width:33.8px;height:1.6px;background:#c6c5c3;"></div>
<div style="left:1.2px;top:256px;width:33.8px;height:1.6px;background:#c6c5c3;"></div>
<div style="left:1.2px;top:281.6px;width:33.8px;height:1.6px;background:#c6c5c3;"></div>
<div style="left:1.2px;top:307.2px;width:33.8px;height:1.6px;background:#c6c5c3;"></div>
<div style="left:1.2px;top:334.4px;width:33.8px;height:1.6px;background:#c6c5c3;"></div>
<div style="left:1.2px;top:360px;width:33.8px;height:1.6px;background:#c6c5c3;"></div>
<div style="left:1.2px;top:387.2px;width:33.8px;height:1.6px;background:#c6c5c3;"></div>
<div style="left:1.2px;top:412.8px;width:33.8px;height:1.6px;background:#c6c5c3;"></div>
<div style="left:1.2px;top:440px;width:33.8px;height:1.6px;background:#c6c5c3;"></div>
<div style="left:1.2px;top:465.6px;width:33.8px;height:1.6px;background:#c6c5c3;"></div>
<div style="left:1.2px;top:489.6px;width:33.8px;height:1.6px;background:#c6c5c3;"></div>
<div style="left:1.2px;top:510.4px;width:33.8px;height:1.6px;background:#c6c5c3;"></div>
<div style="left:1.2px;top:532.8px;width:33.8px;height:1.6px;background:#c6c5c3;"></div>
<div style="left:1.2px;top:555.2px;width:33.8px;height:1.6px;background:#c6c5c3;"></div>
<div style="left:1.2px;top:577.6px;width:33.8px;height:1.6px;background:#c6c5c3;"></div>
<div style="left:1.2px;top:598.4px;width:33.8px;height:1.6px;background:#c6c5c3;"></div>
<div style="left:1.2px;top:620.8px;width:33.8px;height:1.6px;background:#c6c5c3;"></div>
<div style="left:1.2px;top:643.2px;width:33.8px;height:1.6px;background:#c6c5c3;"></div>
<div style="left:1.2px;top:665.6px;width:33.8px;height:1.6px;background:#c6c5c3;"></div>
<div style="left:1.2px;top:686.4px;width:33.8px;height:1.6px;background:#c6c5c3;"></div>
<div style="left:1.2px;top:708.8px;width:33.8px;height:1.6px;background:#c6c5c3;"></div>
<div style="left:1.2px;top:731.2px;width:33.8px;height:1.6px;background:#c6c5c3;"></div>
<div style="left:1.2px;top:753.6px;width:33.8px;height:1.6px;background:#c6c5c3;"></div>
<div style="left:1.2px;top:774.4px;width:33.8px;height:1.6px;background:#c6c5c3;"></div>
<div style="left:1.2px;top:796.8px;width:33.8px;height:1.6px;background:#c6c5c3;"></div>
<div style="left:1.2px;top:819.2px;width:33.8px;height:1.6px;background:#c6c5c3;"></div>
<div style="left:1.2px;top:841.6px;width:33.8px;height:1.6px;background:#c6c5c3;"></div>
<div style="left:1.2px;top:862.4px;width:33.8px;height:1.6px;background:#c6c5c3;"></div>
<div style="left:1.2px;top:884.8px;width:33.8px;height:1.6px;background:#c6c5c3;"></div>
<div style="left:1.2px;top:907.2px;width:33.8px;height:1.6px;background:#c6c5c3;"></div>
<div style="left:1.2px;top:929.6px;width:33.8px;height:1.6px;background:#c6c5c3;"></div>
<div style="left:1.2px;top:950.4px;width:33.8px;height:1.6px;background:#c6c5c3;"></div>
<div style="left:1.2px;top:972.8px;width:33.8px;height:1.6px;background:#c6c5c3;"></div>
<div style="left:1.2px;top:995.2px;width:33.8px;height:1.6px;background:#c6c5c3;"></div>
<div style="left:33.6px;top:182.2px;width:1.6px;height:829px;background:#c6c5c3;"></div>
<div style="left:0px;top:182.2px;width:1.2px;height:829px;background:#c4c3c1;"></div>
<div style="left:70.4px;top:490.5px;width:1.6px;height:520.7px;background:#d9d9d9;"></div>
<div style="left:116.8px;top:490.5px;width:1.6px;height:520.7px;background:#d9d9d9;"></div>
<div style="left:268.8px;top:490.5px;width:1.6px;height:520.7px;background:#d9d9d9;"></div>
<div style="left:406.4px;top:490.5px;width:1.6px;height:520.7px;background:#d9d9d9;"></div>
<div style="left:574.4px;top:490.5px;width:1.6px;height:520.7px;background:#d9d9d9;"></div>
<div style="left:665.6px;top:490.5px;width:1.6px;height:520.7px;background:#d9d9d9;"></div>
<div style="left:880px;top:490.5px;width:1.6px;height:520.7px;background:#d9d9d9;"></div>
<div style="left:1001.6px;top:490.5px;width:1.6px;height:520.7px;background:#d9d9d9;"></div>
<div style="left:1153.6px;top:490.5px;width:1.6px;height:520.7px;background:#d9d9d9;"></div>
<div style="left:1244.8px;top:490.5px;width:1.6px;height:520.7px;background:#d9d9d9;"></div>
<div style="left:1382.4px;top:490.5px;width:1.6px;height:520.7px;background:#d9d9d9;"></div>
<div style="left:1473.6px;top:490.5px;width:1.6px;height:520.7px;background:#d9d9d9;"></div>
<div style="left:1625.6px;top:490.5px;width:1.6px;height:520.7px;background:#d9d9d9;"></div>
<div style="left:1718.4px;top:490.5px;width:1.6px;height:520.7px;background:#d9d9d9;"></div>
<div style="left:1808px;top:490.5px;width:1.6px;height:520.7px;background:#d9d9d9;"></div>
<div style="left:35px;top:489.6px;width:1808.2px;height:1.6px;background:#d9d9d9;"></div>
<div style="left:35px;top:510.4px;width:1808.2px;height:1.6px;background:#d9d9d9;"></div>
<div style="left:35px;top:532.8px;width:1808.2px;height:1.6px;background:#d9d9d9;"></div>
<div style="left:35px;top:555.2px;width:1808.2px;height:1.6px;background:#d9d9d9;"></div>
<div style="left:35px;top:577.6px;width:1808.2px;height:1.6px;background:#d9d9d9;"></div>
<div style="left:35px;top:598.4px;width:1808.2px;height:1.6px;background:#d9d9d9;"></div>
<div style="left:35px;top:620.8px;width:1808.2px;height:1.6px;background:#d9d9d9;"></div>
<div style="left:35px;top:643.2px;width:1808.2px;height:1.6px;background:#d9d9d9;"></div>
<div style="left:35px;top:665.6px;width:1808.2px;height:1.6px;background:#d9d9d9;"></div>
<div style="left:35px;top:686.4px;width:1808.2px;height:1.6px;background:#d9d9d9;"></div>
<div style="left:35px;top:708.8px;width:1808.2px;height:1.6px;background:#d9d9d9;"></div>
<div style="left:35px;top:731.2px;width:1808.2px;height:1.6px;background:#d9d9d9;"></div>
<div style="left:35px;top:753.6px;width:1808.2px;height:1.6px;background:#d9d9d9;"></div>
<div style="left:35px;top:774.4px;width:1808.2px;height:1.6px;background:#d9d9d9;"></div>
<div style="left:35px;top:796.8px;width:1808.2px;height:1.6px;background:#d9d9d9;"></div>
<div style="left:35px;top:819.2px;width:1808.2px;height:1.6px;background:#d9d9d9;"></div>
<div style="left:35px;top:841.6px;width:1808.2px;height:1.6px;background:#d9d9d9;"></div>
<div style="left:35px;top:862.4px;width:1808.2px;height:1.6px;background:#d9d9d9;"></div>
<div style="left:35px;top:884.8px;width:1808.2px;height:1.6px;background:#d9d9d9;"></div>
<div style="left:35px;top:907.2px;width:1808.2px;height:1.6px;background:#d9d9d9;"></div>
<div style="left:35px;top:929.6px;width:1808.2px;height:1.6px;background:#d9d9d9;"></div>
<div style="left:35px;top:950.4px;width:1808.2px;height:1.6px;background:#d9d9d9;"></div>
<div style="left:35px;top:972.8px;width:1808.2px;height:1.6px;background:#d9d9d9;"></div>
<div style="left:35px;top:995.2px;width:1808.2px;height:1.6px;background:#d9d9d9;"></div>
<div style="left:35px;top:230.1px;width:1592px;height:26.4px;background:#f0fdfa;"></div>
<div style="left:1627px;top:230.1px;width:216.2px;height:26.4px;background:#fffbeb;"></div>
<div style="left:1627px;top:256.5px;width:216.2px;height:26.4px;background:#fffbeb;"></div>
<div style="left:35px;top:282.9px;width:1592px;height:26.4px;background:#f0fdfa;"></div>
<div style="left:1627px;top:282.9px;width:216.2px;height:26.4px;background:#fffbeb;"></div>
<div style="left:1627px;top:309.3px;width:216.2px;height:26.4px;background:#fffbeb;"></div>
<div style="left:35px;top:335.7px;width:1592px;height:26.4px;background:#f0fdfa;"></div>
<div style="left:1627px;top:335.7px;width:216.2px;height:26.4px;background:#fffbeb;"></div>
<div style="left:1627px;top:362.1px;width:216.2px;height:26.4px;background:#fffbeb;"></div>
<div style="left:35px;top:388.5px;width:1592px;height:26.4px;background:#f0fdfa;"></div>
<div style="left:1627px;top:388.5px;width:216.2px;height:26.4px;background:#fffbeb;"></div>
<div style="left:1627px;top:414.9px;width:216.2px;height:26.4px;background:#fffbeb;"></div>
<div style="left:35px;top:441.3px;width:1592px;height:26.4px;background:#f0fdfa;"></div>
<div style="left:1627px;top:441.3px;width:216.2px;height:26.4px;background:#fffbeb;"></div>
<div style="left:35px;top:467.7px;width:1808.2px;height:22.8px;background:#def1ee;"></div>
<div style="left:35px;top:182.2px;width:1808.2px;height:47.9px;background:#0f766e;"></div>
<div style="left:70.4px;top:182.2px;width:1.6px;height:46.9px;background:#93d2c9;"></div>
<div style="left:70.4px;top:230.1px;width:1.6px;height:260.4px;background:#e1e4e5;"></div>
<div style="left:116.8px;top:182.2px;width:1.6px;height:46.9px;background:#93d2c9;"></div>
<div style="left:116.8px;top:230.1px;width:1.6px;height:260.4px;background:#e1e4e5;"></div>
<div style="left:268.8px;top:182.2px;width:1.6px;height:46.9px;background:#93d2c9;"></div>
<div style="left:268.8px;top:230.1px;width:1.6px;height:260.4px;background:#e1e4e5;"></div>
<div style="left:406.4px;top:182.2px;width:1.6px;height:46.9px;background:#93d2c9;"></div>
<div style="left:406.4px;top:230.1px;width:1.6px;height:260.4px;background:#e1e4e5;"></div>
<div style="left:574.4px;top:182.2px;width:1.6px;height:46.9px;background:#93d2c9;"></div>
<div style="left:574.4px;top:230.1px;width:1.6px;height:260.4px;background:#e1e4e5;"></div>
<div style="left:665.6px;top:182.2px;width:1.6px;height:46.9px;background:#93d2c9;"></div>
<div style="left:665.6px;top:230.1px;width:1.6px;height:260.4px;background:#e1e4e5;"></div>
<div style="left:880px;top:182.2px;width:1.6px;height:46.9px;background:#93d2c9;"></div>
<div style="left:880px;top:230.1px;width:1.6px;height:260.4px;background:#e1e4e5;"></div>
<div style="left:1001.6px;top:182.2px;width:1.6px;height:46.9px;background:#93d2c9;"></div>
<div style="left:1001.6px;top:230.1px;width:1.6px;height:260.4px;background:#e1e4e5;"></div>
<div style="left:1153.6px;top:182.2px;width:1.6px;height:46.9px;background:#93d2c9;"></div>
<div style="left:1153.6px;top:230.1px;width:1.6px;height:260.4px;background:#e1e4e5;"></div>
<div style="left:1244.8px;top:182.2px;width:1.6px;height:46.9px;background:#93d2c9;"></div>
<div style="left:1244.8px;top:230.1px;width:1.6px;height:260.4px;background:#e1e4e5;"></div>
<div style="left:1382.4px;top:182.2px;width:1.6px;height:46.9px;background:#93d2c9;"></div>
<div style="left:1382.4px;top:230.1px;width:1.6px;height:260.4px;background:#e1e4e5;"></div>
<div style="left:1473.6px;top:182.2px;width:1.6px;height:46.9px;background:#93d2c9;"></div>
<div style="left:1473.6px;top:230.1px;width:1.6px;height:260.4px;background:#e1e4e5;"></div>
<div style="left:1625.6px;top:182.2px;width:1.6px;height:46.9px;background:#93d2c9;"></div>
<div style="left:1625.6px;top:230.1px;width:1.6px;height:260.4px;background:#e1e4e5;"></div>
<div style="left:1718.4px;top:182.2px;width:1.6px;height:46.9px;background:#93d2c9;"></div>
<div style="left:1718.4px;top:230.1px;width:1.6px;height:260.4px;background:#e1e4e5;"></div>
<div style="left:1808px;top:182.2px;width:1.6px;height:46.9px;background:#93d2c9;"></div>
<div style="left:1808px;top:230.1px;width:1.6px;height:260.4px;background:#e1e4e5;"></div>
<div style="left:35px;top:256px;width:1808.2px;height:1.6px;background:#e1e4e5;"></div>
<div style="left:35px;top:281.6px;width:1808.2px;height:1.6px;background:#e1e4e5;"></div>
<div style="left:35px;top:307.2px;width:1808.2px;height:1.6px;background:#e1e4e5;"></div>
<div style="left:35px;top:334.4px;width:1808.2px;height:1.6px;background:#e1e4e5;"></div>
<div style="left:35px;top:360px;width:1808.2px;height:1.6px;background:#e1e4e5;"></div>
<div style="left:35px;top:387.2px;width:1808.2px;height:1.6px;background:#e1e4e5;"></div>
<div style="left:35px;top:412.8px;width:1808.2px;height:1.6px;background:#e1e4e5;"></div>
<div style="left:35px;top:440px;width:1808.2px;height:1.6px;background:#e1e4e5;"></div>
<div style="left:35px;top:465.6px;width:1808.2px;height:1.6px;background:#e1e4e5;"></div>
<div style="left:35px;top:489.6px;width:1808.2px;height:1.6px;background:#e1e4e5;"></div>
<div style="left:35px;top:227.2px;width:1808.2px;height:1.6px;background:#4f9a90;"></div>
<div style="left:35px;top:182.4px;width:1808.2px;height:1.6px;background:#3f9186;"></div>
<div style="left:0px;top:228.8px;width:1843.2px;height:1.6px;background:#172c30;"></div>
<span class="t" style="left:45.92px;top:194.16px;font-size:16.4px;line-height:19.68px;color:#e6fffb;font-weight:700;transform:scaleX(1.0045);">ID</span>
<span class="t" style="left:81.6px;top:196.6px;font-size:13.4px;line-height:16.08px;color:#fff;font-weight:700;transform:scaleX(1.0203);"><u>Ano</u></span>
<span class="t" style="left:140.16px;top:196.6px;font-size:13.4px;line-height:16.08px;color:#fff;font-weight:700;transform:scaleX(1.0103);"><u>Centro</u> <u>de</u> <u>Custo</u></span>
<span class="t" style="left:289.6px;top:196.6px;font-size:13.4px;line-height:16.08px;color:#fff;font-weight:700;transform:scaleX(1.0732);"><u>Departamento</u></span>
<span class="t" style="left:443.84px;top:196.6px;font-size:13.4px;line-height:16.08px;color:#fff;font-weight:700;transform:scaleX(1.0330);"><u>Conta</u> (<u>Grupo</u>)</span>
<span class="t" style="left:589.76px;top:196.6px;font-size:13.4px;line-height:16.08px;color:#fff;font-weight:700;transform:scaleX(1.0051);"><u>Categoria</u></span>
<span class="t" style="left:708.8px;top:196.6px;font-size:13.4px;line-height:16.08px;color:#fff;font-weight:700;transform:scaleX(1.0489);"><u>Fornecedor/Cliente</u></span>
<span class="t" style="left:908.8px;top:196.6px;font-size:13.4px;line-height:16.08px;color:#fff;font-weight:700;transform:scaleX(0.9759);"><u>CNPJ/CPF</u></span>
<span class="t" style="left:1018.56px;top:196.6px;font-size:13.4px;line-height:16.08px;color:#fff;font-weight:700;transform:scaleX(1.0372);">Regime <u>Tribut&aacute;rio</u></span>
<span class="t" style="left:1156.8px;top:196.6px;font-size:13.4px;line-height:16.08px;color:#fff;font-weight:700;transform:scaleX(1.0381);"><u>Tipo</u> <u>Imposto</u></span>
<span class="t" style="left:1248.96px;top:196.6px;font-size:13.4px;line-height:16.08px;color:#fff;font-weight:700;transform:scaleX(0.9942);">Base <u>de</u> <u>C&aacute;lculo</u> (R$)</span>
<span class="t" style="left:1388.8px;top:196.6px;font-size:13.4px;line-height:16.08px;color:#fff;font-weight:700;transform:scaleX(1.0365);"><u>Al&iacute;quota</u> (%)</span>
<span class="t" style="left:1736.96px;top:196.6px;font-size:13.4px;line-height:16.08px;color:#fff;font-weight:700;transform:scaleX(1.0234);"><u>Fev</u> (R$)</span>
<div class="clipM" style="left:1475px;top:182.2px;width:151px;height:45.9px;overflow:hidden;"></div>
<span class="t" style="left:1470.88px;top:196.6px;font-size:13.4px;line-height:16.08px;color:#fff;font-weight:700;transform:scaleX(1.0959);clip-path:inset(0 2.2% 0 2.4%);"><u>Imposto</u> <u>Estimado</u> (R$)</span>
<span class="t" style="left:1646.4px;top:193.88px;font-size:16.6px;line-height:19.92px;color:#fff;font-weight:700;transform:scaleX(0.7967);">Jan (R$)</span>
<span class="t" style="left:1826.88px;top:193.88px;font-size:16.6px;line-height:19.92px;color:#fff;font-weight:700;transform:scaleX(0.8604);">Mar (R$)</span>
<svg class="i" style="left:1474.72px;top:201.94px" width="4" height="7" viewBox="0 0 4 7"><path d="M4 0L0 3.5L4 7Z" fill="#e8242c"/></svg>
<svg class="i" style="left:1622.08px;top:201.94px" width="4" height="7" viewBox="0 0 4 7"><path d="M0 0L4 3.5L0 7Z" fill="#e8242c"/></svg>
<div class="c m" style="left:35px;top:230.1px;width:36px;height:25.4px;"><span>1</span></div>
<div class="c m" style="left:72px;top:230.1px;width:45px;height:25.4px;"><span>2026</span></div>
<div class="c " style="left:118px;top:230.1px;width:151px;height:25.4px;"><span><u>Comercial</u></span></div>
<div class="c " style="left:270px;top:230.1px;width:136px;height:25.4px;"><span><u>Vendas</u></span></div>
<div class="c " style="left:407px;top:230.1px;width:167px;height:25.4px;"><span><u>Receita</u> <u>Servi&ccedil;os</u></span></div>
<div class="c " style="left:575px;top:230.1px;width:91px;height:25.4px;"><span><u>Receita</u></span></div>
<div class="c " style="left:667px;top:230.1px;width:213px;height:25.4px;"><span>Hospital Santa Helena (Campinas/SP)</span></div>
<div class="c " style="left:881px;top:230.1px;width:121px;height:25.4px;letter-spacing:.22px;"><span>11.222.333/0001-44</span></div>
<div class="c " style="left:1003px;top:230.1px;width:151px;height:25.4px;"><span><u>Lucro</u> <u>Presumido</u></span></div>
<div class="c " style="left:1155px;top:230.1px;width:90px;height:25.4px;"><span><span style="display:inline-block;transform:scaleX(.84);transform-origin:0 50%">ISS</span></span></div>
<div class="c " style="left:1246px;top:230.1px;width:136px;height:25.4px;"><span>180000</span></div>
<div class="c " style="left:1383px;top:230.1px;width:91px;height:25.4px;"><span>0.05</span></div>
<div class="c r" style="left:1475px;top:230.1px;width:151px;height:25.4px;"><span>9,000.00</span></div>
<div class="c r" style="left:1627px;top:230.1px;width:91px;height:25.4px;"><span>15,000.00</span></div>
<div class="c r" style="left:1719px;top:230.1px;width:90px;height:25.4px;"><span>15,000.00</span></div>
<div class="c m" style="left:35px;top:256.5px;width:36px;height:25.4px;"><span>2</span></div>
<div class="c m" style="left:72px;top:256.5px;width:45px;height:25.4px;"><span>2026</span></div>
<div class="c " style="left:118px;top:256.5px;width:151px;height:25.4px;"><span><u>Comercial</u></span></div>
<div class="c " style="left:270px;top:256.5px;width:136px;height:25.4px;"><span><u>Vendas</u></span></div>
<div class="c " style="left:407px;top:256.5px;width:167px;height:25.4px;"><span><u>Receita</u> <u>Contratos</u></span></div>
<div class="c " style="left:575px;top:256.5px;width:91px;height:25.4px;"><span><u>Receita</u></span></div>
<div class="c " style="left:667px;top:256.5px;width:213px;height:25.4px;"><span><u>Varej&atilde;o</u> Recife (Recife/PE)</span></div>
<div class="c " style="left:881px;top:256.5px;width:121px;height:25.4px;letter-spacing:.22px;"><span>22.333.444/0001-55</span></div>
<div class="c " style="left:1003px;top:256.5px;width:151px;height:25.4px;"><span><u>Simples</u> <u>Nacional</u></span></div>
<div class="c " style="left:1155px;top:256.5px;width:90px;height:25.4px;"><span>-</span></div>
<div class="c " style="left:1246px;top:256.5px;width:136px;height:25.4px;"><span>0</span></div>
<div class="c " style="left:1383px;top:256.5px;width:91px;height:25.4px;"><span>0</span></div>
<div class="c r" style="left:1475px;top:256.5px;width:151px;height:25.4px;"><span>0.00</span></div>
<div class="c r" style="left:1627px;top:256.5px;width:91px;height:25.4px;"><span>8,000.00</span></div>
<div class="c r" style="left:1719px;top:256.5px;width:90px;height:25.4px;"><span>8,000.00</span></div>
<div class="c m" style="left:35px;top:282.9px;width:36px;height:25.4px;"><span>3</span></div>
<div class="c m" style="left:72px;top:282.9px;width:45px;height:25.4px;"><span>2026</span></div>
<div class="c " style="left:118px;top:282.9px;width:151px;height:25.4px;"><span><span style="display:inline-block;transform:scaleX(.84);transform-origin:0 50%">RH</span></span></div>
<div class="c " style="left:270px;top:282.9px;width:136px;height:25.4px;"><span><u>Recursos</u> <u>Humanos</u></span></div>
<div class="c " style="left:407px;top:282.9px;width:167px;height:25.4px;"><span><u>Folha</u> <u>CLT</u></span></div>
<div class="c " style="left:575px;top:282.9px;width:91px;height:25.4px;"><span><u>Despesa</u></span></div>
<div class="c " style="left:667px;top:282.9px;width:213px;height:25.4px;"><span><u>Colaboradores</u></span></div>
<div class="c " style="left:881px;top:282.9px;width:121px;height:25.4px;letter-spacing:.22px;"><span>-</span></div>
<div class="c " style="left:1003px;top:282.9px;width:151px;height:25.4px;"><span><u>Lucro</u> Real</span></div>
<div class="c " style="left:1155px;top:282.9px;width:90px;height:25.4px;"><span><span style="display:inline-block;transform:scaleX(.84);transform-origin:0 50%"><u>INSS</u></span></span></div>
<div class="c " style="left:1246px;top:282.9px;width:136px;height:25.4px;"><span>95000</span></div>
<div class="c " style="left:1383px;top:282.9px;width:91px;height:25.4px;"><span>0.28</span></div>
<div class="c r" style="left:1475px;top:282.9px;width:151px;height:25.4px;"><span>26,600.00</span></div>
<div class="c r" style="left:1627px;top:282.9px;width:91px;height:25.4px;"><span>28,000.00</span></div>
<div class="c r" style="left:1719px;top:282.9px;width:90px;height:25.4px;"><span>28,000.00</span></div>
<div class="c m" style="left:35px;top:309.3px;width:36px;height:25.4px;"><span>4</span></div>
<div class="c m" style="left:72px;top:309.3px;width:45px;height:25.4px;"><span>2026</span></div>
<div class="c " style="left:118px;top:309.3px;width:151px;height:25.4px;"><span><u>Administrativo</u></span></div>
<div class="c " style="left:270px;top:309.3px;width:136px;height:25.4px;"><span><u>Administra&ccedil;&atilde;o</u></span></div>
<div class="c " style="left:407px;top:309.3px;width:167px;height:25.4px;"><span><u>Aluguel</u></span></div>
<div class="c " style="left:575px;top:309.3px;width:91px;height:25.4px;"><span><u>Despesa</u></span></div>
<div class="c " style="left:667px;top:309.3px;width:213px;height:25.4px;"><span><u>Im&oacute;veis</u> <u>Paulista</u> (<u>S&atilde;o</u> <u>Paulo</u>/SP)</span></div>
<div class="c " style="left:881px;top:309.3px;width:121px;height:25.4px;letter-spacing:.22px;"><span>33.444.555/0001-66</span></div>
<div class="c " style="left:1003px;top:309.3px;width:151px;height:25.4px;"><span><u>Lucro</u> <u>Presumido</u></span></div>
<div class="c " style="left:1155px;top:309.3px;width:90px;height:25.4px;"><span>-</span></div>
<div class="c " style="left:1246px;top:309.3px;width:136px;height:25.4px;"><span>0</span></div>
<div class="c " style="left:1383px;top:309.3px;width:91px;height:25.4px;"><span>0</span></div>
<div class="c r" style="left:1475px;top:309.3px;width:151px;height:25.4px;"><span>0.00</span></div>
<div class="c r" style="left:1627px;top:309.3px;width:91px;height:25.4px;"><span>7,500.00</span></div>
<div class="c r" style="left:1719px;top:309.3px;width:90px;height:25.4px;"><span>7,500.00</span></div>
<div class="c m" style="left:35px;top:335.7px;width:36px;height:25.4px;"><span>5</span></div>
<div class="c m" style="left:72px;top:335.7px;width:45px;height:25.4px;"><span>2026</span></div>
<div class="c " style="left:118px;top:335.7px;width:151px;height:25.4px;"><span><u>Comercial</u></span></div>
<div class="c " style="left:270px;top:335.7px;width:136px;height:25.4px;"><span>Marketing</span></div>
<div class="c " style="left:407px;top:335.7px;width:167px;height:25.4px;"><span><u>Publicidade</u> e Marketing</span></div>
<div class="c " style="left:575px;top:335.7px;width:91px;height:25.4px;"><span><u>Despesa</u></span></div>
<div class="c  wr" style="left:667px;top:335.7px;width:213px;height:25.4px;"><span><u>Ag&ecirc;ncia</u> <u>Mar&eacute;</u> Digital (Rio <u>de</u><br><u>Janeiro/RJ)</u></span></div>
<div class="c " style="left:881px;top:335.7px;width:121px;height:25.4px;letter-spacing:.22px;"><span>44.555.666/0001-77</span></div>
<div class="c " style="left:1003px;top:335.7px;width:151px;height:25.4px;"><span><u>Simples</u> <u>Nacional</u></span></div>
<div class="c " style="left:1155px;top:335.7px;width:90px;height:25.4px;"><span><span style="display:inline-block;transform:scaleX(.84);transform-origin:0 50%">ISS</span></span></div>
<div class="c " style="left:1246px;top:335.7px;width:136px;height:25.4px;"><span>60000</span></div>
<div class="c " style="left:1383px;top:335.7px;width:91px;height:25.4px;"><span>0.05</span></div>
<div class="c r" style="left:1475px;top:335.7px;width:151px;height:25.4px;"><span>3,000.00</span></div>
<div class="c r" style="left:1627px;top:335.7px;width:91px;height:25.4px;"><span>4,000.00</span></div>
<div class="c r" style="left:1719px;top:335.7px;width:90px;height:25.4px;"><span>4,000.00</span></div>
<svg class="i" style="left:874.6px;top:344.9px" width="5" height="8" viewBox="0 0 5 8"><path d="M0 0L5 4L0 8Z" fill="#111"/></svg>
<div class="c m" style="left:35px;top:362.1px;width:36px;height:25.4px;"><span>6</span></div>
<div class="c m" style="left:72px;top:362.1px;width:45px;height:25.4px;"><span>2026</span></div>
<div class="c " style="left:118px;top:362.1px;width:151px;height:25.4px;"><span><u>Opera&ccedil;&otilde;es</u></span></div>
<div class="c " style="left:270px;top:362.1px;width:136px;height:25.4px;"><span><u>Infraestrutura</u></span></div>
<div class="c " style="left:407px;top:362.1px;width:167px;height:25.4px;"><span><u>Energia</u> <u>El&eacute;trica</u></span></div>
<div class="c " style="left:575px;top:362.1px;width:91px;height:25.4px;"><span><u>Despesa</u></span></div>
<div class="c " style="left:667px;top:362.1px;width:213px;height:25.4px;"><span><u>CPFL</u> <u>Paulista</u> (Campinas/SP)</span></div>
<div class="c " style="left:881px;top:362.1px;width:121px;height:25.4px;letter-spacing:.22px;"><span>55.666.777/0001-88</span></div>
<div class="c " style="left:1003px;top:362.1px;width:151px;height:25.4px;"><span><u>Lucro</u> Real</span></div>
<div class="c " style="left:1155px;top:362.1px;width:90px;height:25.4px;"><span><span style="display:inline-block;transform:scaleX(.84);transform-origin:0 50%"><u>ICMS</u></span></span></div>
<div class="c " style="left:1246px;top:362.1px;width:136px;height:25.4px;"><span>36000</span></div>
<div class="c " style="left:1383px;top:362.1px;width:91px;height:25.4px;"><span>0.12</span></div>
<div class="c r" style="left:1475px;top:362.1px;width:151px;height:25.4px;"><span>4,320.00</span></div>
<div class="c r" style="left:1627px;top:362.1px;width:91px;height:25.4px;"><span>3,800.00</span></div>
<div class="c r" style="left:1719px;top:362.1px;width:90px;height:25.4px;"><span>3,600.00</span></div>
<div class="c m" style="left:35px;top:388.5px;width:36px;height:25.4px;"><span>7</span></div>
<div class="c m" style="left:72px;top:388.5px;width:45px;height:25.4px;"><span>2026</span></div>
<div class="c " style="left:118px;top:388.5px;width:151px;height:25.4px;"><span><span style="display:inline-block;transform:scaleX(.84);transform-origin:0 50%">TI</span></span></div>
<div class="c " style="left:270px;top:388.5px;width:136px;height:25.4px;"><span><u>Tecnologia</u></span></div>
<div class="c " style="left:407px;top:388.5px;width:167px;height:25.4px;"><span><u>Licen&ccedil;as</u> Software</span></div>
<div class="c " style="left:575px;top:388.5px;width:91px;height:25.4px;"><span><u>Despesa</u></span></div>
<div class="c " style="left:667px;top:388.5px;width:213px;height:25.4px;"><span><u>Nuvem</u> <u>Sistemas</u> <u>Ltda</u> (Curitiba/PR)</span></div>
<div class="c " style="left:881px;top:388.5px;width:121px;height:25.4px;letter-spacing:.22px;"><span>66.777.888/0001-99</span></div>
<div class="c " style="left:1003px;top:388.5px;width:151px;height:25.4px;"><span><u>Lucro</u> <u>Presumido</u></span></div>
<div class="c " style="left:1155px;top:388.5px;width:90px;height:25.4px;"><span>-</span></div>
<div class="c " style="left:1246px;top:388.5px;width:136px;height:25.4px;"><span>0</span></div>
<div class="c " style="left:1383px;top:388.5px;width:91px;height:25.4px;"><span>0</span></div>
<div class="c r" style="left:1475px;top:388.5px;width:151px;height:25.4px;"><span>0.00</span></div>
<div class="c r" style="left:1627px;top:388.5px;width:91px;height:25.4px;"><span>4,200.00</span></div>
<div class="c r" style="left:1719px;top:388.5px;width:90px;height:25.4px;"><span>4,200.00</span></div>
<div class="c m" style="left:35px;top:414.9px;width:36px;height:25.4px;"><span>8</span></div>
<div class="c m" style="left:72px;top:414.9px;width:45px;height:25.4px;"><span>2026</span></div>
<div class="c " style="left:118px;top:414.9px;width:151px;height:25.4px;"><span><u>Opera&ccedil;&otilde;es</u></span></div>
<div class="c " style="left:270px;top:414.9px;width:136px;height:25.4px;"><span><u>Log&iacute;stica</u></span></div>
<div class="c " style="left:407px;top:414.9px;width:167px;height:25.4px;"><span><u>Frete</u> e <u>Log&iacute;stica</u></span></div>
<div class="c " style="left:575px;top:414.9px;width:91px;height:25.4px;"><span><u>Despesa</u></span></div>
<div class="c  wr" style="left:667px;top:414.9px;width:213px;height:25.4px;"><span><u>Transportadora</u> Serra <u>Azul</u> <u>(Belo</u><br><u>Horizonte/MG)</u></span></div>
<div class="c " style="left:881px;top:414.9px;width:121px;height:25.4px;letter-spacing:.22px;"><span>77.888.999/0001-11</span></div>
<div class="c " style="left:1003px;top:414.9px;width:151px;height:25.4px;"><span><u>Lucro</u> Real</span></div>
<div class="c " style="left:1155px;top:414.9px;width:90px;height:25.4px;"><span><span style="display:inline-block;transform:scaleX(.84);transform-origin:0 50%"><u>ICMS</u></span></span></div>
<div class="c " style="left:1246px;top:414.9px;width:136px;height:25.4px;"><span>85000</span></div>
<div class="c " style="left:1383px;top:414.9px;width:91px;height:25.4px;"><span>0.12</span></div>
<div class="c r" style="left:1475px;top:414.9px;width:151px;height:25.4px;"><span>10,200.00</span></div>
<div class="c r" style="left:1627px;top:414.9px;width:91px;height:25.4px;"><span>6,500.00</span></div>
<div class="c r" style="left:1719px;top:414.9px;width:90px;height:25.4px;"><span>5,800.00</span></div>
<svg class="i" style="left:874.6px;top:424.1px" width="5" height="8" viewBox="0 0 5 8"><path d="M0 0L5 4L0 8Z" fill="#111"/></svg>
<div class="c m" style="left:35px;top:441.3px;width:36px;height:25.4px;"><span>9</span></div>
<div class="c m" style="left:72px;top:441.3px;width:45px;height:25.4px;"><span>2026</span></div>
<div class="c " style="left:118px;top:441.3px;width:151px;height:25.4px;"><span>Fiscal</span></div>
<div class="c " style="left:270px;top:441.3px;width:136px;height:25.4px;"><span><u>Contabilidade</u></span></div>
<div class="c " style="left:407px;top:441.3px;width:167px;height:25.4px;"><span><u>Honor&aacute;rios</u> <u>Cont&aacute;beis</u></span></div>
<div class="c " style="left:575px;top:441.3px;width:91px;height:25.4px;"><span><u>Despesa</u></span></div>
<div class="c  wr" style="left:667px;top:441.3px;width:213px;height:25.4px;"><span><u>Escrit&oacute;rio</u> <u>Cont&aacute;bil</u> <u>Oliveira</u><br>(Salvador/BA)</span></div>
<div class="c " style="left:881px;top:441.3px;width:121px;height:25.4px;letter-spacing:.22px;"><span>88.999.000/0001-22</span></div>
<div class="c " style="left:1003px;top:441.3px;width:151px;height:25.4px;"><span><u>Simples</u> <u>Nacional</u></span></div>
<div class="c " style="left:1155px;top:441.3px;width:90px;height:25.4px;"><span>-</span></div>
<div class="c " style="left:1246px;top:441.3px;width:136px;height:25.4px;"><span>0</span></div>
<div class="c " style="left:1383px;top:441.3px;width:91px;height:25.4px;"><span>0</span></div>
<div class="c r" style="left:1475px;top:441.3px;width:151px;height:25.4px;"><span>0.00</span></div>
<div class="c r" style="left:1627px;top:441.3px;width:91px;height:25.4px;"><span>3,500.00</span></div>
<div class="c r" style="left:1719px;top:441.3px;width:90px;height:25.4px;"><span>3,500.00</span></div>
<svg class="i" style="left:874.6px;top:450.5px" width="5" height="8" viewBox="0 0 5 8"><path d="M0 0L5 4L0 8Z" fill="#111"/></svg>
<div class="c m b" style="left:407px;top:467.7px;width:167px;height:21.8px;color:#0f766e;"><span><u>TOTAIS</u></span></div>
<div class="c r b" style="left:1246px;top:467.7px;width:136px;height:21.8px;"><span>456,000.00</span></div>
<div class="c r b" style="left:1475px;top:467.7px;width:151px;height:21.8px;"><span>53,120.00</span></div>
<div class="c r b" style="left:1627px;top:467.7px;width:91px;height:21.8px;"><span>80,500.00</span></div>
<div class="c r b" style="left:1719px;top:467.7px;width:90px;height:21.8px;"><span>79,600.00</span></div>
<div style="left:34.5px;top:182.2px;width:37px;height:46px;border:2px solid #9be4ee;"></div>
<div style="left:69.5px;top:225.6px;width:5px;height:4.5px;background:#3584e4;border-left:1px solid #9be4ee;border-top:1px solid #9be4ee;"></div></div>
<div style="left:1843.2px;top:160px;width:15.52px;height:851.2px;background:#cdcdcd;"></div>
<div style="left:1845.76px;top:163.84px;width:7.84px;height:405.44px;background:#808080;border-radius:3px;"></div>
<div style="left:0px;top:1011.2px;width:1843.2px;height:15.52px;background:#cdcdcd;"></div>
<div style="left:3.2px;top:1015.04px;width:579.2px;height:8.64px;background:#808080;border-radius:3px;"></div>
<div style="left:1838.08px;top:1015.36px;width:1.6px;height:8.32px;background:#555;"></div>
<div style="left:1843.2px;top:1011.52px;width:14.72px;height:41.6px;background:#f6f5f4;"></div>
<div style="left:1857.6px;top:1011.2px;width:0px;height:41.6px;width:1px;background:#dddad7;"></div>
<div style="left:1858.08px;top:542.4px;width:6.72px;height:79.2px;background:#9a9a9a;"></div>
<svg class="i" style="left:1859.52px;top:579.2px" width="4" height="7" viewBox="0 0 4 7"><path d="M0 0L4 3.5L0 7Z" fill="#fff"/></svg>
<svg class="i" style="left:1877.6px;top:172.16px;" width="24" height="24" viewBox="0 0 24 24"><rect x="1.5" y="2.5" width="21" height="19.5" stroke="#3a3a38" fill="#fff" stroke-width="1.3" /><path d="M1 3H23" stroke="#3a3a38" fill="none" stroke-width="2.6" /><path d="M5 10H19M5 16H19" stroke="#1e8bcd" fill="none" stroke-width="1.3" /><path d="M14 7.8V12.2M9.5 13.8V18.2" stroke="#1e8bcd" fill="none" stroke-width="2" /></svg>
<svg class="i" style="left:1877.6px;top:218.4px;" width="24" height="24" viewBox="0 0 24 24"><path d="M1.5 17L7.8 2H9.2L15.5 17M4 11.5H13" stroke="#3a3a38" fill="none" stroke-width="1.9" /><path d="M17.5 16.5L22.5 9.5L24.3 10.8L19.6 18Z" stroke="#55554f" fill="#eef2f6" stroke-width="1" /><path d="M13 20.2C13 17.2 16.2 16 17.8 17.4C19.6 19.2 18 23.6 11.5 23.4C12.6 22.8 13 21.6 13 20.2Z" stroke="#2f85d0" fill="#6fb0e6" stroke-width="1" /></svg>
<svg class="i" style="left:1877.6px;top:264.64px;" width="24" height="24" viewBox="0 0 24 24"><path d="M1.5 19V2.5H8L10 5.5H22.5V19Z" stroke="#eb9b4b" fill="#f9d08a" stroke-width="1" /><rect x="9.5" y="10.5" width="13.5" height="12.5" stroke="#3a3a38" fill="#fff" stroke-width="1.3" /><path d="M10.2 22L14.5 16.5L17 19L19.5 16L22.5 20V22.5H10.2Z" stroke="none" fill="#3d91d6" stroke-width="1" /><circle cx="13.2" cy="13.8" r="1.2" fill="#f5c252"/></svg>
<svg class="i" style="left:1877.6px;top:310.88px;" width="24" height="24" viewBox="0 0 24 24"><circle cx="12" cy="12" r="10.5" fill="#fff" stroke="#3a3a38" stroke-width="1.3"/><path d="M16.8 7.2L13.8 13.8L7.2 16.8L10.2 10.2Z" stroke="#1e8bcd" fill="#6fb0e6" stroke-width="1.2" /><circle cx="12" cy="12" r="1.2" fill="#fff"/></svg>
<svg class="i" style="left:1877.6px;top:357.6px;" width="24" height="24" viewBox="0 0 24 24"><g stroke="#3d91d0" stroke-width=".6"><text x="4" y="19" font-size="25" fill="#3d91d0" font-style="italic" font-family="Liberation Serif">f</text><text x="12" y="20.5" font-size="19.5" fill="#3d91d0" font-style="italic" font-family="Liberation Serif">x</text></g></svg>
<div style="left:0px;top:1025.6px;width:1857.6px;height:27.2px;background:#f6f5f4;"></div>
<div style="left:147.2px;top:1026.56px;width:132.32px;height:25.6px;background:#fff;"></div>
<div style="left:147.2px;top:1049.28px;width:132.32px;height:2.88px;background:#7b7b7b;"></div>
<span class="t" style="left:160px;top:1030.78px;font-size:14.3px;line-height:17.16px;color:#1c1c1c;font-weight:700;transform:scaleX(0.9192);">Orçamento_2026</span>
<span class="t" style="left:295.52px;top:1030.78px;font-size:14.3px;line-height:17.16px;color:#2e3436;transform:scaleX(0.9089);">Resumo_Dashboard</span>
<span class="t" style="left:446.72px;top:1030.78px;font-size:14.3px;line-height:17.16px;color:#2e3436;transform:scaleX(0.9411);">Instruções</span>
<div style="left:431.2px;top:1032px;width:0px;height:14.4px;width:1px;background:#c8c6c3;"></div>
<div style="left:525.28px;top:1032px;width:0px;height:14.4px;width:1px;background:#c8c6c3;"></div>
<svg class="i" style="left:9.92px;top:1029.28px" width="18.88" height="20.16" viewBox="0 0 18.88 20.16"><path d="M1 0.8H3.6V19.4H1ZM5 10.1L12 1L15 3.2L10.6 8.6H18V11.6H10.6L15 17L12 19.2Z" fill="#fbfbfa" stroke="#d9d7d4" stroke-width="1.3"/></svg>
<svg class="i" style="left:33.92px;top:1029.28px" width="21.76" height="20.16" viewBox="0 0 21.76 20.16"><path d="M1 3.5H3.2V16.7H1ZM4 10.1L12 3.5V16.7ZM12.5 10.1L20.8 3.5V16.7Z" fill="#fbfbfa" stroke="#d9d7d4" stroke-width="1.3"/></svg>
<svg class="i" style="left:59.84px;top:1029.28px" width="21.76" height="20.16" viewBox="0 0 21.76 20.16"><path d="M18.6 3.5H20.8V16.7H18.6ZM17.8 10.1L9.8 3.5V16.7ZM9.3 10.1L1 3.5V16.7Z" fill="#fbfbfa" stroke="#d9d7d4" stroke-width="1.3"/></svg>
<svg class="i" style="left:85.12px;top:1029.28px" width="20.48" height="20.16" viewBox="0 0 20.48 20.16"><path d="M17 0.8H19.6V19.4H17ZM15.6 10.1L8.6 1L5.6 3.2L10 8.6H2.6V11.6H10L5.6 17L8.6 19.2Z" fill="#fbfbfa" stroke="#d9d7d4" stroke-width="1.3"/></svg>
<svg class="i" style="left:116.8px;top:1027.36px;" width="24" height="24" viewBox="0 0 24 24"><path d="M3.5 0.5H14.5L18.5 4.5V23.5H3.5Z" stroke="#e1dfdc" fill="#fff" stroke-width="1" /><circle cx="18.5" cy="11.5" r="4.1" fill="#2f7fd0" stroke="#1c5fa8" stroke-width=".8"/><path d="M16.2 11.5H20.8M18.5 9.2V13.8" stroke="#fff" fill="none" stroke-width="1.4" /></svg>
<div style="left:0px;top:1052.8px;width:1920px;height:0px;height:1px;background:#d8d5d2;"></div>
<svg class="i" style="left:6.88px;top:1055.2px;" width="24" height="24" viewBox="0 0 24 24"><path d="M3.5 3.5H20.5V20.5H6L3.5 18Z" stroke="#9c9c9a" fill="#ececea" stroke-width="1.2" /><rect x="7" y="3.5" width="10" height="6" stroke="#9c9c9a" fill="#fafafa" stroke-width="1.1" /><rect x="7.5" y="14.5" width="9" height="6" stroke="#9c9c9a" fill="#fafafa" stroke-width="1.1" /><rect x="9" y="16" width="2.4" height="3.8" stroke="none" fill="#9c9c9a" stroke-width="1" /></svg>
<span class="t" style="left:44px;top:1058.8px;font-size:14px;line-height:16.8px;color:#2e3436;transform:scaleX(0.9174);">Sheet 1 of 3</span>
<span class="t" style="left:577.12px;top:1058.8px;font-size:14px;line-height:16.8px;color:#2e3436;transform:scaleX(0.9193);">PageStyle_Orçamento_2026</span>
<span class="t" style="left:1040px;top:1058.8px;font-size:14px;line-height:16.8px;color:#2e3436;transform:scaleX(0.9099);">English (USA)</span>
<span class="t" style="left:1510.4px;top:1058.8px;font-size:14px;line-height:16.8px;color:#2e3436;transform:scaleX(0.9201);">Average: ; Sum: 0</span>
<span class="t" style="left:1876.8px;top:1058.8px;font-size:14px;line-height:16.8px;color:#2e3436;transform:scaleX(0.8846);">100%</span>
<div style="left:300px;top:1056.8px;width:0px;height:23.2px;width:1px;background:#e0dedb;"></div>
<div style="left:565.6px;top:1056.8px;width:0px;height:23.2px;width:1px;background:#e0dedb;"></div>
<div style="left:937.12px;top:1056.8px;width:0px;height:23.2px;width:1px;background:#e0dedb;"></div>
<div style="left:1220.16px;top:1056.8px;width:0px;height:23.2px;width:1px;background:#e0dedb;"></div>
<div style="left:1295.04px;top:1056.8px;width:0px;height:23.2px;width:1px;background:#e0dedb;"></div>
<div style="left:1343.52px;top:1056.8px;width:0px;height:23.2px;width:1px;background:#e0dedb;"></div>
<div style="left:1375.68px;top:1056.8px;width:0px;height:23.2px;width:1px;background:#e0dedb;"></div>
<div style="left:1407.2px;top:1056.8px;width:0px;height:23.2px;width:1px;background:#e0dedb;"></div>
<div style="left:1714.08px;top:1056.8px;width:0px;height:23.2px;width:1px;background:#e0dedb;"></div>
<div style="left:1305.12px;top:1062.4px;width:18.4px;height:10.4px;border:1px solid #1e8bcd;background:#fff;"></div>
<svg class="i" style="left:1327.2px;top:1058.88px" width="8" height="17" viewBox="0 0 8 17"><path d="M1 1H7M1 16H7M4 1V16" stroke="#555" stroke-width="1.6" fill="none"/></svg>
<div style="left:1740.8px;top:1066.72px;width:103.68px;height:0px;height:1px;background:#777;"></div>
<div style="left:1790.08px;top:1062.88px;width:4.16px;height:10.56px;border:1px solid #444;background:#f6f5f4;"></div>
<span class="t" style="left:1724.16px;top:1057.32px;font-size:17px;line-height:20.4px;color:#2e3436;font-weight:700;transform:scaleX(1.0626);">−</span>
<span class="t" style="left:1849.6px;top:1057.32px;font-size:17px;line-height:20.4px;color:#2e3436;font-weight:700;transform:scaleX(1.0626);">+</span>
</div>
</body></html>
